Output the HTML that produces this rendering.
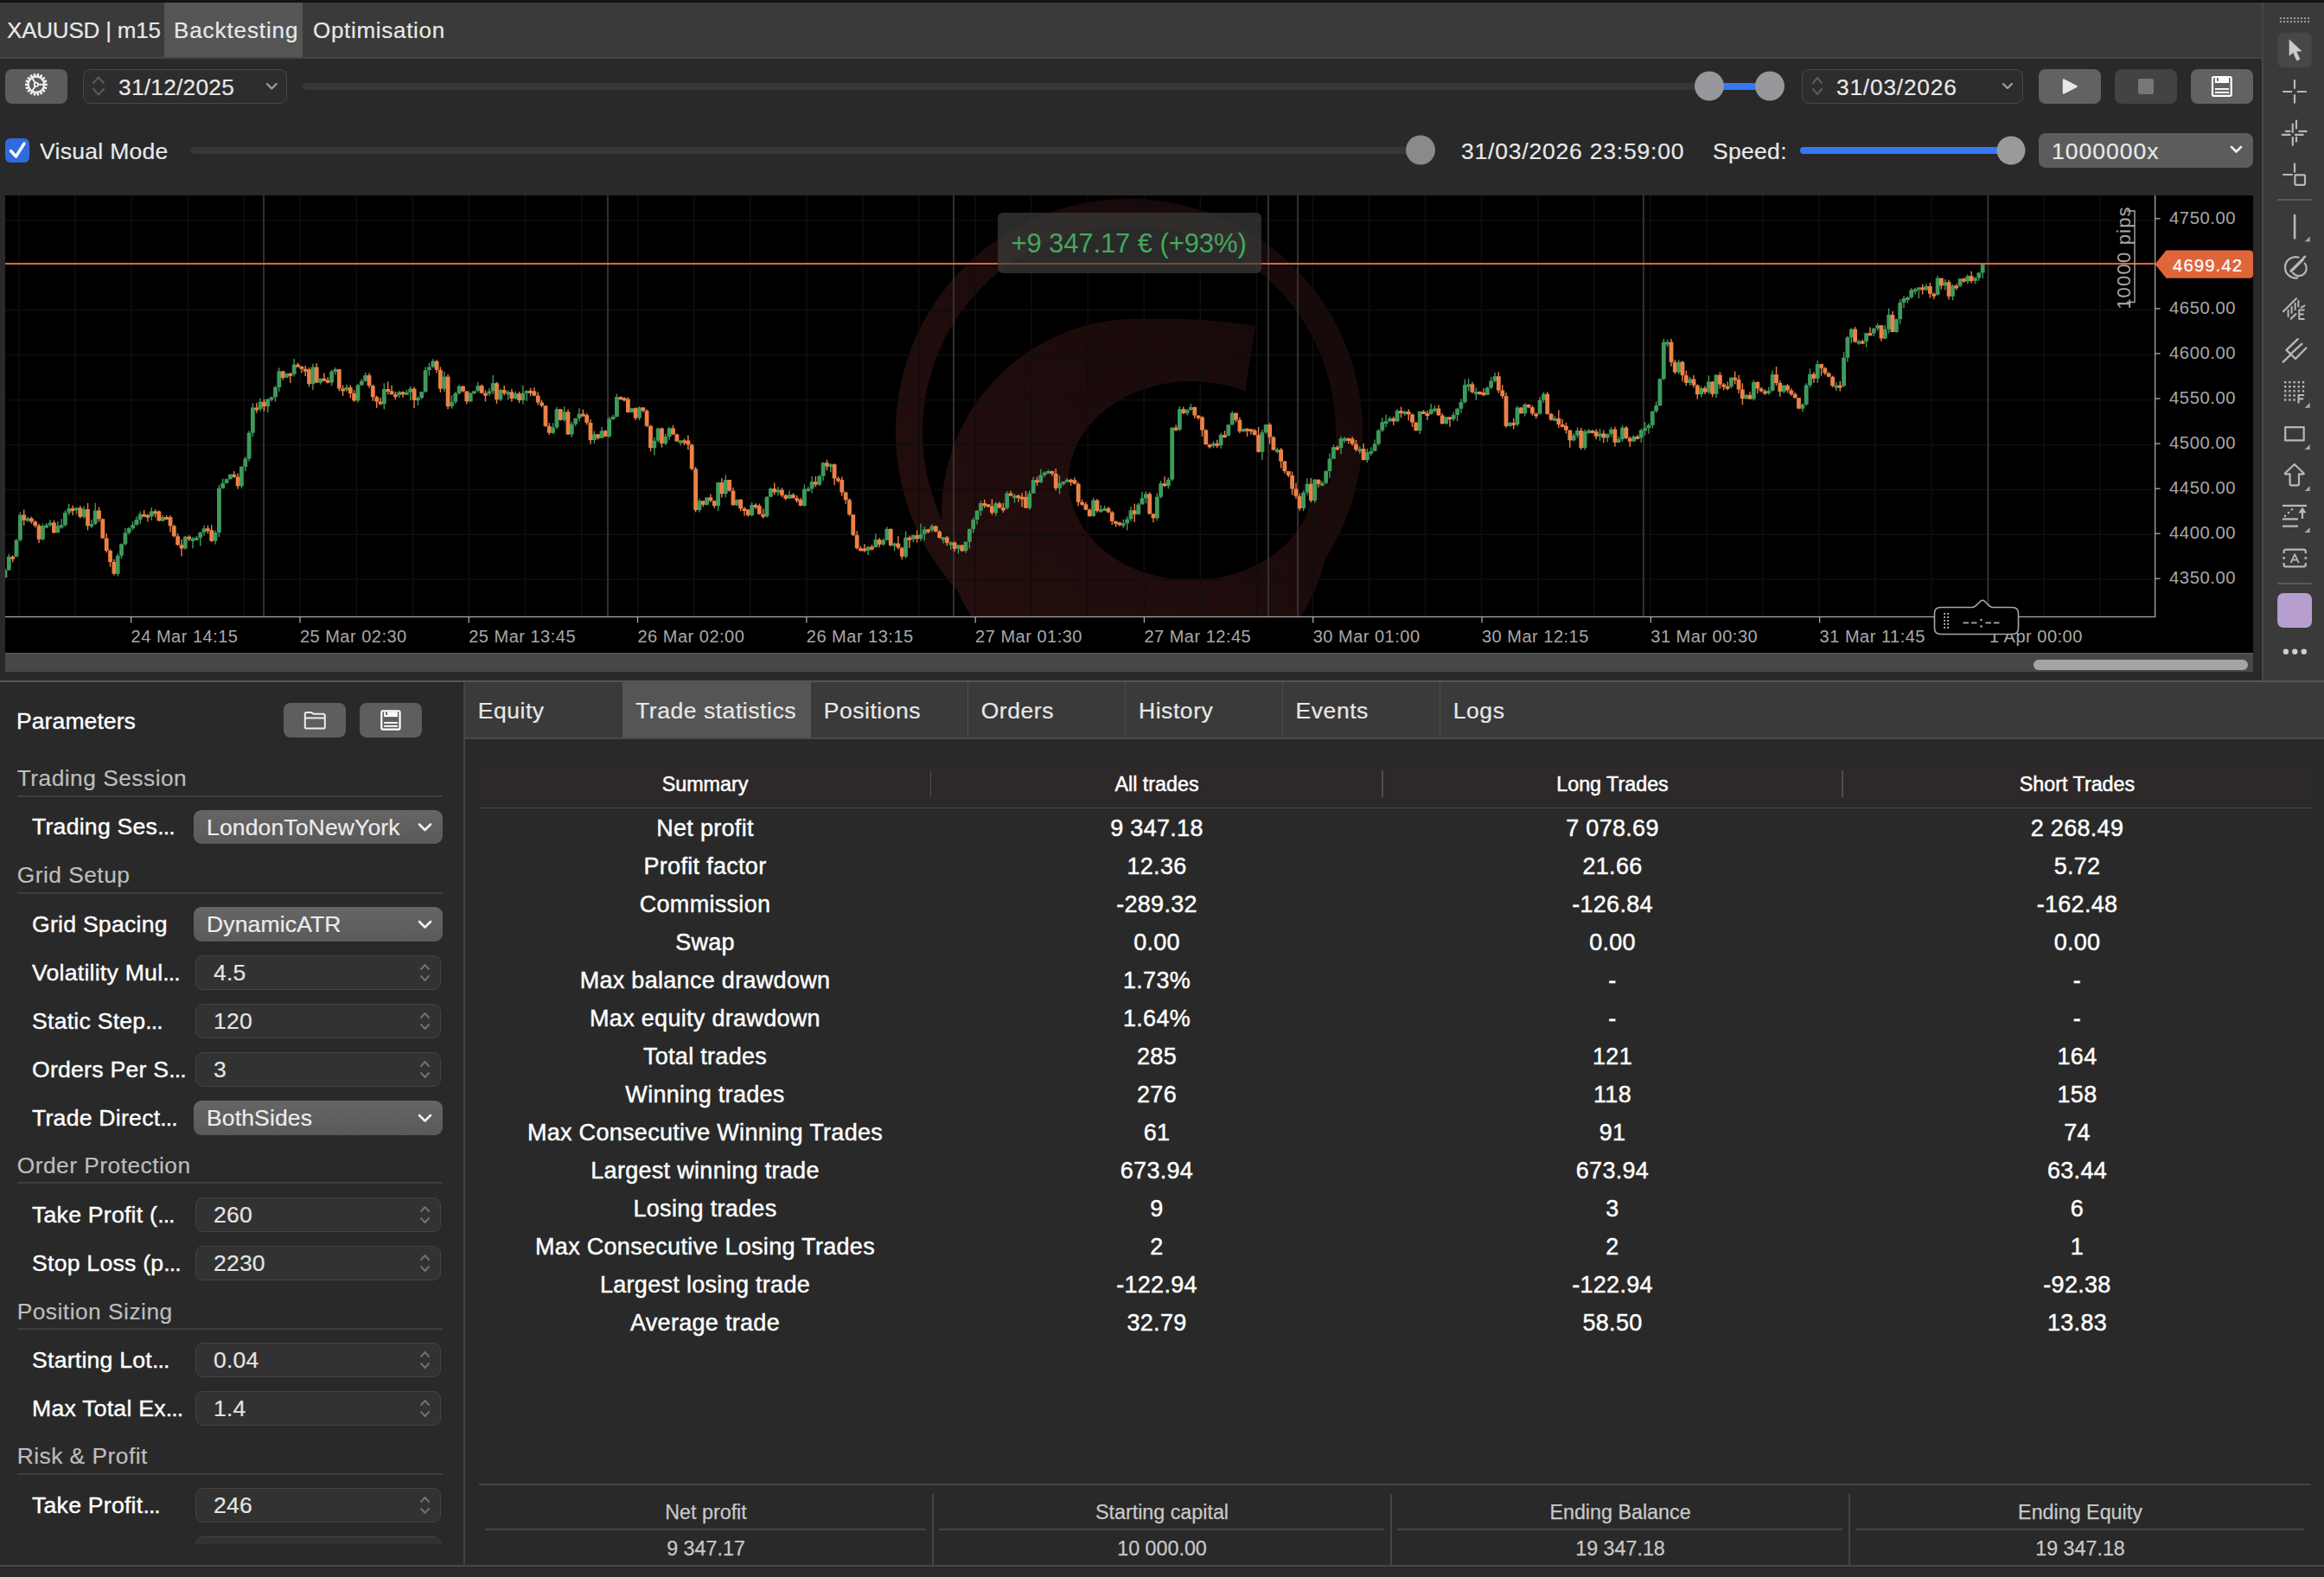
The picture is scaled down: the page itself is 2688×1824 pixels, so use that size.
<!DOCTYPE html><html><head><meta charset="utf-8"><style>
html,body{margin:0;padding:0;width:2688px;height:1824px;overflow:hidden;background:#292929;font-family:"Liberation Sans", sans-serif;}
.t{position:absolute;white-space:nowrap;line-height:1;font-family:"Liberation Sans", sans-serif;}
svg{position:absolute;left:0;top:0;overflow:visible}
</style></head><body>
<div style="position:absolute;left:0px;top:0px;width:2688px;height:3px;background:#121212;"></div>
<div style="position:absolute;left:0px;top:3px;width:2616px;height:63px;background:#3a3a3a;"></div>
<div style="position:absolute;left:0px;top:66px;width:2616px;height:2px;background:#444;"></div>
<div style="position:absolute;left:190px;top:3px;width:160px;height:63px;background:#555555;"></div>
<div class="t" style="left:8.0px;top:22.0px;font-size:26px;color:#e8e8e8;letter-spacing:-0.2px;-webkit-text-stroke:0.2px #e8e8e8;">XAUUSD | m15</div>
<div class="t" style="left:201.0px;top:22.0px;font-size:26px;color:#e8e8e8;letter-spacing:0.9px;-webkit-text-stroke:0.2px #e8e8e8;">Backtesting</div>
<div class="t" style="left:362.0px;top:22.0px;font-size:26px;color:#e8e8e8;letter-spacing:0.7px;-webkit-text-stroke:0.2px #e8e8e8;">Optimisation</div>
<div style="position:absolute;left:2616px;top:3px;width:72px;height:785px;background:#3a3a3a;"></div>
<div style="position:absolute;left:2616px;top:3px;width:1.6px;height:785px;background:#464646;"></div>
<div style="position:absolute;left:6px;top:80px;width:72px;height:40px;background:#5c5c5c;border-radius:8px;"></div>
<svg width="2688" height="200" style="left:0;top:0">
<g transform="translate(41.9,97.8)" fill="none" stroke="#f4f4f4" stroke-width="1.9">
<circle r="9.0"/><circle r="2.2" stroke-width="1.7"/>
<line x1="2.2" y1="0" x2="9" y2="0" stroke-width="1.8"/><line x1="-1.1" y1="1.9" x2="-5.2" y2="8.2"/><line x1="-1.1" y1="-1.9" x2="-5.2" y2="-8.2"/>
</g>
<g transform="translate(41.9,97.8)" fill="#f4f4f4"><path d="M-1.5,-9.5 L-1.1,-12.9 L1.1,-12.9 L1.5,-9.5 Z" transform="rotate(10)"/><path d="M-1.5,-9.5 L-1.1,-12.9 L1.1,-12.9 L1.5,-9.5 Z" transform="rotate(30)"/><path d="M-1.5,-9.5 L-1.1,-12.9 L1.1,-12.9 L1.5,-9.5 Z" transform="rotate(50)"/><path d="M-1.5,-9.5 L-1.1,-12.9 L1.1,-12.9 L1.5,-9.5 Z" transform="rotate(70)"/><path d="M-1.5,-9.5 L-1.1,-12.9 L1.1,-12.9 L1.5,-9.5 Z" transform="rotate(90)"/><path d="M-1.5,-9.5 L-1.1,-12.9 L1.1,-12.9 L1.5,-9.5 Z" transform="rotate(110)"/><path d="M-1.5,-9.5 L-1.1,-12.9 L1.1,-12.9 L1.5,-9.5 Z" transform="rotate(130)"/><path d="M-1.5,-9.5 L-1.1,-12.9 L1.1,-12.9 L1.5,-9.5 Z" transform="rotate(150)"/><path d="M-1.5,-9.5 L-1.1,-12.9 L1.1,-12.9 L1.5,-9.5 Z" transform="rotate(170)"/><path d="M-1.5,-9.5 L-1.1,-12.9 L1.1,-12.9 L1.5,-9.5 Z" transform="rotate(190)"/><path d="M-1.5,-9.5 L-1.1,-12.9 L1.1,-12.9 L1.5,-9.5 Z" transform="rotate(210)"/><path d="M-1.5,-9.5 L-1.1,-12.9 L1.1,-12.9 L1.5,-9.5 Z" transform="rotate(230)"/><path d="M-1.5,-9.5 L-1.1,-12.9 L1.1,-12.9 L1.5,-9.5 Z" transform="rotate(250)"/><path d="M-1.5,-9.5 L-1.1,-12.9 L1.1,-12.9 L1.5,-9.5 Z" transform="rotate(270)"/><path d="M-1.5,-9.5 L-1.1,-12.9 L1.1,-12.9 L1.5,-9.5 Z" transform="rotate(290)"/><path d="M-1.5,-9.5 L-1.1,-12.9 L1.1,-12.9 L1.5,-9.5 Z" transform="rotate(310)"/><path d="M-1.5,-9.5 L-1.1,-12.9 L1.1,-12.9 L1.5,-9.5 Z" transform="rotate(330)"/><path d="M-1.5,-9.5 L-1.1,-12.9 L1.1,-12.9 L1.5,-9.5 Z" transform="rotate(350)"/></g>
</svg>
<div style="position:absolute;left:96px;top:80px;width:236px;height:40px;background:#2d2d2d;border-radius:8px;box-sizing:border-box;border:1.5px solid #474747;"></div>
<svg width="2688" height="200"><g fill="none" stroke="#5a5a5a" stroke-width="2.2" stroke-linecap="round" stroke-linejoin="round">
<polyline points="108,96 114,89.5 120,96"/><polyline points="108,103 114,109.5 120,103"/></g>
<polyline points="309,97 314.3,102.5 319.6,97" fill="none" stroke="#9a9a9a" stroke-width="2.4" stroke-linecap="round" stroke-linejoin="round"/>
</svg>
<div class="t" style="left:137.0px;top:87.5px;font-size:26.3px;color:#e8e8e8;letter-spacing:0.25px;-webkit-text-stroke:0.2px #e8e8e8;">31/12/2025</div>
<div style="position:absolute;left:350px;top:96px;width:1700px;height:8px;background:#363636;border-radius:4px;"></div>
<div style="position:absolute;left:1977px;top:96px;width:70px;height:8px;background:#3478f6;"></div>
<svg width="2688" height="200"><circle cx="1977" cy="99.5" r="17" fill="#98979c"/><circle cx="2047" cy="99.5" r="17" fill="#98979c"/></svg>
<div style="position:absolute;left:2084px;top:80px;width:256px;height:40px;background:#2d2d2d;border-radius:8px;box-sizing:border-box;border:1.5px solid #474747;"></div>
<svg width="2688" height="200"><g fill="none" stroke="#5a5a5a" stroke-width="2.2" stroke-linecap="round" stroke-linejoin="round">
<polyline points="2097,96 2102,90 2107,96"/><polyline points="2097,103 2102,109 2107,103"/></g>
<polyline points="2317,97 2322,102 2327,97" fill="none" stroke="#9a9a9a" stroke-width="2.4" stroke-linecap="round" stroke-linejoin="round"/>
</svg>
<div class="t" style="left:2124.0px;top:87.7px;font-size:26.3px;color:#e8e8e8;letter-spacing:0.8px;-webkit-text-stroke:0.2px #e8e8e8;">31/03/2026</div>
<div style="position:absolute;left:2358px;top:80px;width:72px;height:40px;background:#626262;border-radius:8px;"></div>
<div style="position:absolute;left:2446px;top:80px;width:72px;height:40px;background:#434343;border-radius:8px;"></div>
<div style="position:absolute;left:2534px;top:80px;width:72px;height:40px;background:#626262;border-radius:8px;"></div>
<svg width="2688" height="200">
<path d="M2387,92.5 L2401.5,100 L2387,107.5 Z" fill="#e8e8e8" stroke="#e8e8e8" stroke-width="2.5" stroke-linejoin="round"/>
<rect x="2473" y="91" width="18" height="18" rx="2" fill="#777"/>
<rect x="2559.00" y="89.00" width="21.70" height="21.80" rx="1.6" fill="none" stroke="#fff" stroke-width="2.20"/><rect x="2561.90" y="90.00" width="16.10" height="6.00" fill="#fff" /><rect x="2564.00" y="90.10" width="1.90" height="3.70" fill="#626262" /><rect x="2561.90" y="102.00" width="16.10" height="1.90" fill="#fff" /><rect x="2561.90" y="105.90" width="16.10" height="2.00" fill="#fff" />
</svg>
<div style="position:absolute;left:6px;top:160px;width:28px;height:28px;background:#2f6be0;border-radius:6px;"></div>
<svg width="2688" height="200"><polyline points="12.5,174.5 18.5,181 28,166" fill="none" stroke="#fff" stroke-width="3.4" stroke-linecap="round" stroke-linejoin="round"/></svg>
<div class="t" style="left:46.0px;top:161.6px;font-size:26.5px;color:#e8e8e8;letter-spacing:0.3px;-webkit-text-stroke:0.2px #e8e8e8;">Visual Mode</div>
<div style="position:absolute;left:220px;top:170px;width:1430px;height:8px;background:#363636;border-radius:4px;"></div>
<svg width="2688" height="200"><circle cx="1643" cy="173.5" r="17" fill="#8a8a8a"/></svg>
<div class="t" style="left:1690.0px;top:161.6px;font-size:26.5px;color:#e8e8e8;letter-spacing:0.8px;-webkit-text-stroke:0.2px #e8e8e8;">31/03/2026 23:59:00</div>
<div class="t" style="left:1981.0px;top:161.6px;font-size:26.5px;color:#e8e8e8;letter-spacing:0.3px;-webkit-text-stroke:0.2px #e8e8e8;">Speed:</div>
<div style="position:absolute;left:2082px;top:170px;width:246px;height:8px;background:#3478f6;border-radius:4px;"></div>
<svg width="2688" height="200"><circle cx="2326" cy="174" r="16.5" fill="#9a9a9a"/></svg>
<div style="position:absolute;left:2358px;top:154px;width:248px;height:40px;background:#5c5c5c;border-radius:8px;"></div>
<div class="t" style="left:2373.0px;top:161.6px;font-size:26.5px;color:#e8e8e8;letter-spacing:1.0px;-webkit-text-stroke:0.2px #e8e8e8;">1000000x</div>
<svg width="2688" height="200"><polyline points="2581,170 2586.5,175.5 2592,170" fill="none" stroke="#eee" stroke-width="2.6" stroke-linecap="round" stroke-linejoin="round"/></svg>
<svg width="2688" height="800" style="left:0;top:0"><rect x="6" y="226" width="2600" height="529" fill="#000"/><defs><clipPath id="pc"><rect x="6" y="226" width="2486.6" height="487.4"/></clipPath></defs><g clip-path="url(#pc)"><defs><linearGradient id="wg" gradientUnits="userSpaceOnUse" x1="1040" y1="770" x2="1580" y2="230"><stop offset="0" stop-color="#260e0e"/><stop offset="1" stop-color="#140909"/></linearGradient></defs><circle cx="1314" cy="594" r="225" fill="url(#wg)"/><path d="M1300,369.5 Q1400,366 1453,378 L1441,447 L1300,447 Z" fill="url(#wg)"/><ellipse cx="1378" cy="556" rx="142" ry="115" fill="#000"/><path d="M1441,447 L1453,372 L1600,300 L1600,556 L1441,556 Z" fill="#000"/><circle cx="1306" cy="500" r="254.5" fill="none" stroke="url(#wg)" stroke-width="31"/><rect x="6" y="254.2" width="2486.6" height="1.5" fill="#0e0e0e"/><rect x="6" y="306.1" width="2486.6" height="1.5" fill="#0e0e0e"/><rect x="6" y="358.1" width="2486.6" height="1.5" fill="#0e0e0e"/><rect x="6" y="409.9" width="2486.6" height="1.5" fill="#0e0e0e"/><rect x="6" y="461.9" width="2486.6" height="1.5" fill="#0e0e0e"/><rect x="6" y="513.8" width="2486.6" height="1.5" fill="#0e0e0e"/><rect x="6" y="565.6" width="2486.6" height="1.5" fill="#0e0e0e"/><rect x="6" y="617.5" width="2486.6" height="1.5" fill="#0e0e0e"/><rect x="6" y="669.5" width="2486.6" height="1.5" fill="#0e0e0e"/><rect x="21.2" y="226" width="1.5" height="487.4" fill="#0e0e0e"/><rect x="86.3" y="226" width="1.5" height="487.4" fill="#0e0e0e"/><rect x="151.4" y="226" width="1.5" height="487.4" fill="#0e0e0e"/><rect x="216.4" y="226" width="1.5" height="487.4" fill="#0e0e0e"/><rect x="281.5" y="226" width="1.5" height="487.4" fill="#0e0e0e"/><rect x="346.6" y="226" width="1.5" height="487.4" fill="#0e0e0e"/><rect x="411.6" y="226" width="1.5" height="487.4" fill="#0e0e0e"/><rect x="476.7" y="226" width="1.5" height="487.4" fill="#0e0e0e"/><rect x="541.7" y="226" width="1.5" height="487.4" fill="#0e0e0e"/><rect x="606.8" y="226" width="1.5" height="487.4" fill="#0e0e0e"/><rect x="671.9" y="226" width="1.5" height="487.4" fill="#0e0e0e"/><rect x="736.9" y="226" width="1.5" height="487.4" fill="#0e0e0e"/><rect x="802.0" y="226" width="1.5" height="487.4" fill="#0e0e0e"/><rect x="867.0" y="226" width="1.5" height="487.4" fill="#0e0e0e"/><rect x="932.1" y="226" width="1.5" height="487.4" fill="#0e0e0e"/><rect x="997.2" y="226" width="1.5" height="487.4" fill="#0e0e0e"/><rect x="1062.2" y="226" width="1.5" height="487.4" fill="#0e0e0e"/><rect x="1127.3" y="226" width="1.5" height="487.4" fill="#0e0e0e"/><rect x="1192.3" y="226" width="1.5" height="487.4" fill="#0e0e0e"/><rect x="1257.4" y="226" width="1.5" height="487.4" fill="#0e0e0e"/><rect x="1322.5" y="226" width="1.5" height="487.4" fill="#0e0e0e"/><rect x="1387.5" y="226" width="1.5" height="487.4" fill="#0e0e0e"/><rect x="1452.6" y="226" width="1.5" height="487.4" fill="#0e0e0e"/><rect x="1517.6" y="226" width="1.5" height="487.4" fill="#0e0e0e"/><rect x="1582.7" y="226" width="1.5" height="487.4" fill="#0e0e0e"/><rect x="1647.8" y="226" width="1.5" height="487.4" fill="#0e0e0e"/><rect x="1712.8" y="226" width="1.5" height="487.4" fill="#0e0e0e"/><rect x="1777.9" y="226" width="1.5" height="487.4" fill="#0e0e0e"/><rect x="1842.9" y="226" width="1.5" height="487.4" fill="#0e0e0e"/><rect x="1908.0" y="226" width="1.5" height="487.4" fill="#0e0e0e"/><rect x="1973.1" y="226" width="1.5" height="487.4" fill="#0e0e0e"/><rect x="2038.1" y="226" width="1.5" height="487.4" fill="#0e0e0e"/><rect x="2103.2" y="226" width="1.5" height="487.4" fill="#0e0e0e"/><rect x="2168.2" y="226" width="1.5" height="487.4" fill="#0e0e0e"/><rect x="2233.3" y="226" width="1.5" height="487.4" fill="#0e0e0e"/><rect x="2298.3" y="226" width="1.5" height="487.4" fill="#0e0e0e"/><rect x="2363.4" y="226" width="1.5" height="487.4" fill="#0e0e0e"/><rect x="2428.5" y="226" width="1.5" height="487.4" fill="#0e0e0e"/><rect x="304.1" y="226" width="1.8" height="487.4" fill="#363636"/><rect x="702.1" y="226" width="1.8" height="487.4" fill="#363636"/><rect x="1102.1" y="226" width="1.8" height="487.4" fill="#363636"/><rect x="1466.1" y="226" width="1.8" height="487.4" fill="#363636"/><rect x="1500.1" y="226" width="1.8" height="487.4" fill="#363636"/><rect x="1900.1" y="226" width="1.8" height="487.4" fill="#363636"/><rect x="2298.6" y="226" width="1.8" height="487.4" fill="#363636"/><rect x="5.3" y="657.5" width="1.4" height="11.3" fill="#3e9a5b"/><rect x="3.6" y="659.3" width="4.8" height="8.7" fill="#3e9a5b"/><rect x="9.6" y="640.5" width="1.4" height="19.5" fill="#3e9a5b"/><rect x="7.9" y="643.8" width="4.8" height="15.5" fill="#3e9a5b"/><rect x="14.0" y="642.3" width="1.4" height="8.1" fill="#ec8147"/><rect x="12.3" y="643.8" width="4.8" height="3.0" fill="#ec8147"/><rect x="18.3" y="623.2" width="1.4" height="21.2" fill="#3e9a5b"/><rect x="16.6" y="624.6" width="4.8" height="19.2" fill="#3e9a5b"/><rect x="22.7" y="592.5" width="1.4" height="33.9" fill="#3e9a5b"/><rect x="21.0" y="595.5" width="4.8" height="29.1" fill="#3e9a5b"/><rect x="27.0" y="589.5" width="1.4" height="18.3" fill="#ec8147"/><rect x="25.3" y="595.5" width="4.8" height="6.2" fill="#ec8147"/><rect x="31.3" y="597.8" width="1.4" height="5.7" fill="#3e9a5b"/><rect x="29.6" y="599.5" width="4.8" height="3.0" fill="#3e9a5b"/><rect x="35.7" y="597.6" width="1.4" height="8.1" fill="#ec8147"/><rect x="34.0" y="599.5" width="4.8" height="4.0" fill="#ec8147"/><rect x="40.0" y="602.1" width="1.4" height="8.1" fill="#ec8147"/><rect x="38.3" y="603.5" width="4.8" height="4.4" fill="#ec8147"/><rect x="44.4" y="605.9" width="1.4" height="22.0" fill="#ec8147"/><rect x="42.7" y="607.9" width="4.8" height="15.9" fill="#ec8147"/><rect x="48.7" y="605.7" width="1.4" height="19.3" fill="#3e9a5b"/><rect x="47.0" y="608.3" width="4.8" height="15.5" fill="#3e9a5b"/><rect x="53.0" y="605.1" width="1.4" height="6.1" fill="#3e9a5b"/><rect x="51.3" y="607.3" width="4.8" height="3.0" fill="#3e9a5b"/><rect x="57.4" y="601.1" width="1.4" height="8.2" fill="#3e9a5b"/><rect x="55.7" y="604.5" width="4.8" height="3.0" fill="#3e9a5b"/><rect x="61.7" y="601.6" width="1.4" height="15.4" fill="#ec8147"/><rect x="60.0" y="604.5" width="4.8" height="11.7" fill="#ec8147"/><rect x="66.1" y="602.7" width="1.4" height="13.6" fill="#3e9a5b"/><rect x="64.4" y="607.9" width="4.8" height="8.2" fill="#3e9a5b"/><rect x="70.4" y="600.3" width="1.4" height="11.2" fill="#3e9a5b"/><rect x="68.7" y="607.3" width="4.8" height="3.0" fill="#3e9a5b"/><rect x="74.7" y="590.3" width="1.4" height="18.8" fill="#3e9a5b"/><rect x="73.0" y="593.1" width="4.8" height="14.2" fill="#3e9a5b"/><rect x="79.1" y="582.9" width="1.4" height="13.1" fill="#3e9a5b"/><rect x="77.4" y="588.0" width="4.8" height="5.1" fill="#3e9a5b"/><rect x="83.4" y="584.7" width="1.4" height="11.4" fill="#ec8147"/><rect x="81.7" y="588.0" width="4.8" height="3.0" fill="#ec8147"/><rect x="87.8" y="586.9" width="1.4" height="8.0" fill="#3e9a5b"/><rect x="86.1" y="587.3" width="4.8" height="3.0" fill="#3e9a5b"/><rect x="92.1" y="585.2" width="1.4" height="14.3" fill="#ec8147"/><rect x="90.4" y="587.3" width="4.8" height="10.5" fill="#ec8147"/><rect x="96.4" y="585.6" width="1.4" height="14.1" fill="#3e9a5b"/><rect x="94.7" y="589.0" width="4.8" height="8.9" fill="#3e9a5b"/><rect x="100.8" y="581.9" width="1.4" height="31.5" fill="#ec8147"/><rect x="99.1" y="589.0" width="4.8" height="19.2" fill="#ec8147"/><rect x="105.1" y="600.9" width="1.4" height="10.1" fill="#3e9a5b"/><rect x="103.4" y="605.9" width="4.8" height="3.0" fill="#3e9a5b"/><rect x="109.5" y="581.7" width="1.4" height="25.5" fill="#3e9a5b"/><rect x="107.8" y="590.5" width="4.8" height="15.4" fill="#3e9a5b"/><rect x="113.8" y="586.6" width="1.4" height="17.1" fill="#ec8147"/><rect x="112.1" y="590.5" width="4.8" height="9.8" fill="#ec8147"/><rect x="118.1" y="599.7" width="1.4" height="23.6" fill="#ec8147"/><rect x="116.4" y="600.3" width="4.8" height="22.2" fill="#ec8147"/><rect x="122.5" y="616.9" width="1.4" height="22.3" fill="#ec8147"/><rect x="120.8" y="622.5" width="4.8" height="14.5" fill="#ec8147"/><rect x="126.8" y="635.1" width="1.4" height="20.4" fill="#ec8147"/><rect x="125.1" y="637.0" width="4.8" height="13.0" fill="#ec8147"/><rect x="131.2" y="646.7" width="1.4" height="18.9" fill="#ec8147"/><rect x="129.5" y="650.0" width="4.8" height="13.7" fill="#ec8147"/><rect x="135.5" y="640.4" width="1.4" height="26.2" fill="#3e9a5b"/><rect x="133.8" y="642.7" width="4.8" height="21.0" fill="#3e9a5b"/><rect x="139.8" y="628.6" width="1.4" height="17.6" fill="#3e9a5b"/><rect x="138.1" y="629.2" width="4.8" height="13.4" fill="#3e9a5b"/><rect x="144.2" y="610.5" width="1.4" height="20.6" fill="#3e9a5b"/><rect x="142.5" y="616.2" width="4.8" height="13.1" fill="#3e9a5b"/><rect x="148.5" y="609.8" width="1.4" height="8.7" fill="#3e9a5b"/><rect x="146.8" y="610.9" width="4.8" height="5.3" fill="#3e9a5b"/><rect x="152.9" y="603.2" width="1.4" height="10.0" fill="#3e9a5b"/><rect x="151.2" y="607.2" width="4.8" height="3.7" fill="#3e9a5b"/><rect x="157.2" y="597.3" width="1.4" height="10.0" fill="#3e9a5b"/><rect x="155.5" y="601.0" width="4.8" height="6.3" fill="#3e9a5b"/><rect x="161.5" y="591.4" width="1.4" height="14.7" fill="#3e9a5b"/><rect x="159.8" y="594.7" width="4.8" height="6.3" fill="#3e9a5b"/><rect x="165.9" y="589.8" width="1.4" height="8.3" fill="#ec8147"/><rect x="164.2" y="594.7" width="4.8" height="3.0" fill="#ec8147"/><rect x="170.2" y="594.5" width="1.4" height="9.0" fill="#ec8147"/><rect x="168.5" y="595.6" width="4.8" height="3.0" fill="#ec8147"/><rect x="174.6" y="586.9" width="1.4" height="15.0" fill="#3e9a5b"/><rect x="172.9" y="591.3" width="4.8" height="6.1" fill="#3e9a5b"/><rect x="178.9" y="589.1" width="1.4" height="9.2" fill="#ec8147"/><rect x="177.2" y="591.3" width="4.8" height="3.0" fill="#ec8147"/><rect x="183.2" y="590.3" width="1.4" height="12.7" fill="#ec8147"/><rect x="181.5" y="591.5" width="4.8" height="10.9" fill="#ec8147"/><rect x="187.6" y="595.9" width="1.4" height="7.2" fill="#3e9a5b"/><rect x="185.9" y="598.0" width="4.8" height="4.5" fill="#3e9a5b"/><rect x="191.9" y="595.9" width="1.4" height="5.0" fill="#ec8147"/><rect x="190.2" y="598.0" width="4.8" height="3.0" fill="#ec8147"/><rect x="196.3" y="596.2" width="1.4" height="19.3" fill="#ec8147"/><rect x="194.6" y="598.1" width="4.8" height="10.3" fill="#ec8147"/><rect x="200.6" y="606.9" width="1.4" height="14.6" fill="#ec8147"/><rect x="198.9" y="608.4" width="4.8" height="11.8" fill="#ec8147"/><rect x="204.9" y="617.0" width="1.4" height="14.3" fill="#ec8147"/><rect x="203.2" y="620.3" width="4.8" height="9.9" fill="#ec8147"/><rect x="209.3" y="623.7" width="1.4" height="19.7" fill="#ec8147"/><rect x="207.6" y="630.1" width="4.8" height="4.3" fill="#ec8147"/><rect x="213.6" y="619.8" width="1.4" height="16.0" fill="#3e9a5b"/><rect x="211.9" y="620.7" width="4.8" height="13.7" fill="#3e9a5b"/><rect x="218.0" y="619.2" width="1.4" height="6.8" fill="#ec8147"/><rect x="216.3" y="620.7" width="4.8" height="3.0" fill="#ec8147"/><rect x="222.3" y="621.0" width="1.4" height="13.3" fill="#3e9a5b"/><rect x="220.6" y="622.8" width="4.8" height="3.0" fill="#3e9a5b"/><rect x="226.6" y="620.0" width="1.4" height="5.3" fill="#3e9a5b"/><rect x="224.9" y="621.9" width="4.8" height="3.0" fill="#3e9a5b"/><rect x="231.0" y="615.5" width="1.4" height="16.0" fill="#3e9a5b"/><rect x="229.3" y="615.7" width="4.8" height="6.2" fill="#3e9a5b"/><rect x="235.3" y="607.6" width="1.4" height="12.2" fill="#3e9a5b"/><rect x="233.6" y="611.2" width="4.8" height="4.6" fill="#3e9a5b"/><rect x="239.7" y="607.8" width="1.4" height="9.3" fill="#ec8147"/><rect x="238.0" y="611.2" width="4.8" height="3.0" fill="#ec8147"/><rect x="244.0" y="607.2" width="1.4" height="19.7" fill="#ec8147"/><rect x="242.3" y="613.2" width="4.8" height="12.5" fill="#ec8147"/><rect x="248.3" y="613.7" width="1.4" height="15.8" fill="#3e9a5b"/><rect x="246.6" y="615.9" width="4.8" height="9.8" fill="#3e9a5b"/><rect x="252.7" y="560.9" width="1.4" height="60.1" fill="#3e9a5b"/><rect x="251.0" y="564.7" width="4.8" height="51.2" fill="#3e9a5b"/><rect x="257.0" y="553.6" width="1.4" height="11.7" fill="#3e9a5b"/><rect x="255.3" y="558.8" width="4.8" height="5.9" fill="#3e9a5b"/><rect x="261.4" y="553.7" width="1.4" height="5.8" fill="#3e9a5b"/><rect x="259.7" y="554.2" width="4.8" height="4.6" fill="#3e9a5b"/><rect x="265.7" y="548.2" width="1.4" height="6.3" fill="#3e9a5b"/><rect x="264.0" y="548.7" width="4.8" height="5.5" fill="#3e9a5b"/><rect x="270.0" y="545.0" width="1.4" height="7.7" fill="#ec8147"/><rect x="268.3" y="548.7" width="4.8" height="3.0" fill="#ec8147"/><rect x="274.4" y="547.5" width="1.4" height="17.9" fill="#ec8147"/><rect x="272.7" y="551.5" width="4.8" height="10.7" fill="#ec8147"/><rect x="278.7" y="539.3" width="1.4" height="25.4" fill="#3e9a5b"/><rect x="277.0" y="539.8" width="4.8" height="22.5" fill="#3e9a5b"/><rect x="283.1" y="528.2" width="1.4" height="16.9" fill="#3e9a5b"/><rect x="281.4" y="530.5" width="4.8" height="9.3" fill="#3e9a5b"/><rect x="287.4" y="498.4" width="1.4" height="35.4" fill="#3e9a5b"/><rect x="285.7" y="500.6" width="4.8" height="29.9" fill="#3e9a5b"/><rect x="291.7" y="466.2" width="1.4" height="38.8" fill="#3e9a5b"/><rect x="290.0" y="471.4" width="4.8" height="29.2" fill="#3e9a5b"/><rect x="296.1" y="466.2" width="1.4" height="11.4" fill="#ec8147"/><rect x="294.4" y="471.4" width="4.8" height="3.0" fill="#ec8147"/><rect x="300.4" y="460.7" width="1.4" height="15.1" fill="#3e9a5b"/><rect x="298.7" y="464.7" width="4.8" height="8.4" fill="#3e9a5b"/><rect x="304.8" y="461.5" width="1.4" height="14.1" fill="#ec8147"/><rect x="303.1" y="464.7" width="4.8" height="5.5" fill="#ec8147"/><rect x="309.1" y="461.0" width="1.4" height="16.1" fill="#3e9a5b"/><rect x="307.4" y="461.6" width="4.8" height="8.5" fill="#3e9a5b"/><rect x="313.4" y="458.9" width="1.4" height="5.4" fill="#3e9a5b"/><rect x="311.7" y="459.3" width="4.8" height="3.0" fill="#3e9a5b"/><rect x="317.8" y="446.4" width="1.4" height="18.1" fill="#3e9a5b"/><rect x="316.1" y="447.9" width="4.8" height="11.4" fill="#3e9a5b"/><rect x="322.1" y="425.4" width="1.4" height="27.7" fill="#3e9a5b"/><rect x="320.4" y="429.4" width="4.8" height="18.5" fill="#3e9a5b"/><rect x="326.5" y="428.8" width="1.4" height="10.7" fill="#ec8147"/><rect x="324.8" y="429.4" width="4.8" height="7.5" fill="#ec8147"/><rect x="330.8" y="431.5" width="1.4" height="5.8" fill="#3e9a5b"/><rect x="329.1" y="431.9" width="4.8" height="4.9" fill="#3e9a5b"/><rect x="335.1" y="431.0" width="1.4" height="12.0" fill="#ec8147"/><rect x="333.4" y="431.9" width="4.8" height="3.0" fill="#ec8147"/><rect x="339.5" y="415.1" width="1.4" height="20.5" fill="#3e9a5b"/><rect x="337.8" y="421.6" width="4.8" height="11.2" fill="#3e9a5b"/><rect x="343.8" y="419.5" width="1.4" height="5.2" fill="#ec8147"/><rect x="342.1" y="421.6" width="4.8" height="3.0" fill="#ec8147"/><rect x="348.2" y="423.5" width="1.4" height="7.9" fill="#ec8147"/><rect x="346.5" y="423.8" width="4.8" height="3.0" fill="#ec8147"/><rect x="352.5" y="423.1" width="1.4" height="11.9" fill="#ec8147"/><rect x="350.8" y="426.7" width="4.8" height="3.0" fill="#ec8147"/><rect x="356.8" y="425.1" width="1.4" height="22.1" fill="#ec8147"/><rect x="355.1" y="427.4" width="4.8" height="16.7" fill="#ec8147"/><rect x="361.2" y="420.8" width="1.4" height="30.2" fill="#3e9a5b"/><rect x="359.5" y="424.6" width="4.8" height="19.6" fill="#3e9a5b"/><rect x="365.5" y="420.2" width="1.4" height="22.5" fill="#ec8147"/><rect x="363.8" y="424.6" width="4.8" height="18.1" fill="#ec8147"/><rect x="369.9" y="437.6" width="1.4" height="7.1" fill="#3e9a5b"/><rect x="368.2" y="437.7" width="4.8" height="4.9" fill="#3e9a5b"/><rect x="374.2" y="431.5" width="1.4" height="9.4" fill="#ec8147"/><rect x="372.5" y="437.7" width="4.8" height="3.0" fill="#ec8147"/><rect x="378.5" y="436.2" width="1.4" height="7.2" fill="#ec8147"/><rect x="376.8" y="439.7" width="4.8" height="3.0" fill="#ec8147"/><rect x="382.9" y="427.7" width="1.4" height="18.5" fill="#3e9a5b"/><rect x="381.2" y="429.7" width="4.8" height="12.8" fill="#3e9a5b"/><rect x="387.2" y="425.0" width="1.4" height="8.6" fill="#3e9a5b"/><rect x="385.5" y="427.1" width="4.8" height="3.0" fill="#3e9a5b"/><rect x="391.6" y="427.1" width="1.4" height="25.2" fill="#ec8147"/><rect x="389.9" y="427.1" width="4.8" height="22.4" fill="#ec8147"/><rect x="395.9" y="445.3" width="1.4" height="12.6" fill="#ec8147"/><rect x="394.2" y="449.5" width="4.8" height="3.0" fill="#ec8147"/><rect x="400.2" y="444.8" width="1.4" height="8.3" fill="#3e9a5b"/><rect x="398.5" y="448.1" width="4.8" height="3.1" fill="#3e9a5b"/><rect x="404.6" y="445.4" width="1.4" height="15.0" fill="#ec8147"/><rect x="402.9" y="448.1" width="4.8" height="7.0" fill="#ec8147"/><rect x="408.9" y="450.9" width="1.4" height="13.8" fill="#ec8147"/><rect x="407.2" y="455.0" width="4.8" height="8.4" fill="#ec8147"/><rect x="413.3" y="444.2" width="1.4" height="21.4" fill="#3e9a5b"/><rect x="411.6" y="445.4" width="4.8" height="18.0" fill="#3e9a5b"/><rect x="417.6" y="438.2" width="1.4" height="8.2" fill="#3e9a5b"/><rect x="415.9" y="440.7" width="4.8" height="4.7" fill="#3e9a5b"/><rect x="421.9" y="431.0" width="1.4" height="10.7" fill="#3e9a5b"/><rect x="420.2" y="434.1" width="4.8" height="6.6" fill="#3e9a5b"/><rect x="426.3" y="431.4" width="1.4" height="17.3" fill="#ec8147"/><rect x="424.6" y="434.1" width="4.8" height="12.0" fill="#ec8147"/><rect x="430.6" y="444.9" width="1.4" height="18.9" fill="#ec8147"/><rect x="428.9" y="446.1" width="4.8" height="13.1" fill="#ec8147"/><rect x="435.0" y="457.6" width="1.4" height="14.2" fill="#ec8147"/><rect x="433.3" y="459.2" width="4.8" height="5.3" fill="#ec8147"/><rect x="439.3" y="459.9" width="1.4" height="8.6" fill="#ec8147"/><rect x="437.6" y="464.5" width="4.8" height="3.0" fill="#ec8147"/><rect x="443.6" y="443.2" width="1.4" height="30.1" fill="#3e9a5b"/><rect x="441.9" y="450.0" width="4.8" height="17.1" fill="#3e9a5b"/><rect x="448.0" y="441.5" width="1.4" height="14.7" fill="#ec8147"/><rect x="446.3" y="450.0" width="4.8" height="3.0" fill="#ec8147"/><rect x="452.3" y="445.7" width="1.4" height="10.9" fill="#ec8147"/><rect x="450.6" y="452.3" width="4.8" height="3.9" fill="#ec8147"/><rect x="456.7" y="453.0" width="1.4" height="9.3" fill="#ec8147"/><rect x="455.0" y="456.2" width="4.8" height="3.0" fill="#ec8147"/><rect x="461.0" y="452.3" width="1.4" height="7.8" fill="#3e9a5b"/><rect x="459.3" y="453.3" width="4.8" height="3.8" fill="#3e9a5b"/><rect x="465.3" y="452.6" width="1.4" height="7.2" fill="#ec8147"/><rect x="463.6" y="453.3" width="4.8" height="3.0" fill="#ec8147"/><rect x="469.7" y="450.6" width="1.4" height="6.5" fill="#3e9a5b"/><rect x="468.0" y="453.7" width="4.8" height="3.0" fill="#3e9a5b"/><rect x="474.0" y="446.7" width="1.4" height="16.4" fill="#3e9a5b"/><rect x="472.3" y="449.6" width="4.8" height="4.1" fill="#3e9a5b"/><rect x="478.4" y="447.4" width="1.4" height="24.6" fill="#ec8147"/><rect x="476.7" y="449.6" width="4.8" height="13.3" fill="#ec8147"/><rect x="482.7" y="458.4" width="1.4" height="10.6" fill="#3e9a5b"/><rect x="481.0" y="460.1" width="4.8" height="3.0" fill="#3e9a5b"/><rect x="487.0" y="452.9" width="1.4" height="9.0" fill="#3e9a5b"/><rect x="485.3" y="453.1" width="4.8" height="7.0" fill="#3e9a5b"/><rect x="491.4" y="424.5" width="1.4" height="29.8" fill="#3e9a5b"/><rect x="489.7" y="428.1" width="4.8" height="25.0" fill="#3e9a5b"/><rect x="495.7" y="419.9" width="1.4" height="14.6" fill="#3e9a5b"/><rect x="494.0" y="424.5" width="4.8" height="3.6" fill="#3e9a5b"/><rect x="500.1" y="415.4" width="1.4" height="10.1" fill="#3e9a5b"/><rect x="498.4" y="417.7" width="4.8" height="6.8" fill="#3e9a5b"/><rect x="504.4" y="416.3" width="1.4" height="15.0" fill="#ec8147"/><rect x="502.7" y="417.7" width="4.8" height="10.2" fill="#ec8147"/><rect x="508.7" y="424.3" width="1.4" height="29.5" fill="#ec8147"/><rect x="507.0" y="427.9" width="4.8" height="21.7" fill="#ec8147"/><rect x="513.1" y="429.6" width="1.4" height="23.4" fill="#3e9a5b"/><rect x="511.4" y="435.6" width="4.8" height="14.0" fill="#3e9a5b"/><rect x="517.4" y="432.8" width="1.4" height="40.4" fill="#ec8147"/><rect x="515.7" y="435.6" width="4.8" height="34.5" fill="#ec8147"/><rect x="521.8" y="457.2" width="1.4" height="15.5" fill="#3e9a5b"/><rect x="520.1" y="464.8" width="4.8" height="5.3" fill="#3e9a5b"/><rect x="526.1" y="453.1" width="1.4" height="14.2" fill="#3e9a5b"/><rect x="524.4" y="454.9" width="4.8" height="9.9" fill="#3e9a5b"/><rect x="530.4" y="445.1" width="1.4" height="11.2" fill="#3e9a5b"/><rect x="528.7" y="446.7" width="4.8" height="8.2" fill="#3e9a5b"/><rect x="534.8" y="446.0" width="1.4" height="7.7" fill="#ec8147"/><rect x="533.1" y="446.7" width="4.8" height="5.8" fill="#ec8147"/><rect x="539.1" y="452.4" width="1.4" height="14.9" fill="#ec8147"/><rect x="537.4" y="452.5" width="4.8" height="11.8" fill="#ec8147"/><rect x="543.5" y="454.4" width="1.4" height="10.4" fill="#3e9a5b"/><rect x="541.8" y="454.4" width="4.8" height="10.0" fill="#3e9a5b"/><rect x="547.8" y="452.1" width="1.4" height="3.6" fill="#3e9a5b"/><rect x="546.1" y="452.2" width="4.8" height="3.0" fill="#3e9a5b"/><rect x="552.1" y="441.7" width="1.4" height="11.9" fill="#3e9a5b"/><rect x="550.4" y="446.1" width="4.8" height="6.0" fill="#3e9a5b"/><rect x="556.5" y="444.6" width="1.4" height="10.8" fill="#ec8147"/><rect x="554.8" y="446.1" width="4.8" height="8.6" fill="#ec8147"/><rect x="560.8" y="451.4" width="1.4" height="13.0" fill="#ec8147"/><rect x="559.1" y="454.7" width="4.8" height="3.0" fill="#ec8147"/><rect x="565.2" y="449.1" width="1.4" height="8.8" fill="#3e9a5b"/><rect x="563.5" y="452.4" width="4.8" height="3.0" fill="#3e9a5b"/><rect x="569.5" y="434.0" width="1.4" height="22.0" fill="#3e9a5b"/><rect x="567.8" y="443.2" width="4.8" height="9.2" fill="#3e9a5b"/><rect x="573.8" y="441.9" width="1.4" height="25.2" fill="#ec8147"/><rect x="572.1" y="443.2" width="4.8" height="19.0" fill="#ec8147"/><rect x="578.2" y="449.2" width="1.4" height="14.8" fill="#3e9a5b"/><rect x="576.5" y="451.0" width="4.8" height="11.2" fill="#3e9a5b"/><rect x="582.5" y="445.8" width="1.4" height="11.5" fill="#ec8147"/><rect x="580.8" y="451.0" width="4.8" height="3.8" fill="#ec8147"/><rect x="586.9" y="451.3" width="1.4" height="10.9" fill="#3e9a5b"/><rect x="585.2" y="453.4" width="4.8" height="3.0" fill="#3e9a5b"/><rect x="591.2" y="449.9" width="1.4" height="14.9" fill="#ec8147"/><rect x="589.5" y="453.4" width="4.8" height="7.6" fill="#ec8147"/><rect x="595.5" y="452.6" width="1.4" height="9.4" fill="#3e9a5b"/><rect x="593.8" y="455.2" width="4.8" height="5.8" fill="#3e9a5b"/><rect x="599.9" y="453.1" width="1.4" height="13.1" fill="#ec8147"/><rect x="598.2" y="455.2" width="4.8" height="7.8" fill="#ec8147"/><rect x="604.2" y="445.8" width="1.4" height="21.6" fill="#3e9a5b"/><rect x="602.5" y="454.7" width="4.8" height="8.3" fill="#3e9a5b"/><rect x="608.6" y="451.6" width="1.4" height="12.4" fill="#3e9a5b"/><rect x="606.9" y="451.9" width="4.8" height="3.0" fill="#3e9a5b"/><rect x="612.9" y="448.8" width="1.4" height="9.5" fill="#ec8147"/><rect x="611.2" y="451.9" width="4.8" height="3.0" fill="#ec8147"/><rect x="617.2" y="448.3" width="1.4" height="10.0" fill="#ec8147"/><rect x="615.5" y="452.4" width="4.8" height="5.2" fill="#ec8147"/><rect x="621.6" y="453.7" width="1.4" height="14.6" fill="#ec8147"/><rect x="619.9" y="457.6" width="4.8" height="7.9" fill="#ec8147"/><rect x="625.9" y="462.6" width="1.4" height="8.5" fill="#ec8147"/><rect x="624.2" y="465.6" width="4.8" height="3.6" fill="#ec8147"/><rect x="630.3" y="469.0" width="1.4" height="24.7" fill="#ec8147"/><rect x="628.6" y="469.2" width="4.8" height="23.7" fill="#ec8147"/><rect x="634.6" y="489.1" width="1.4" height="13.8" fill="#ec8147"/><rect x="632.9" y="492.8" width="4.8" height="7.9" fill="#ec8147"/><rect x="638.9" y="489.2" width="1.4" height="13.0" fill="#3e9a5b"/><rect x="637.2" y="494.4" width="4.8" height="6.4" fill="#3e9a5b"/><rect x="643.3" y="470.8" width="1.4" height="25.5" fill="#3e9a5b"/><rect x="641.6" y="473.2" width="4.8" height="21.1" fill="#3e9a5b"/><rect x="647.6" y="473.0" width="1.4" height="13.6" fill="#ec8147"/><rect x="645.9" y="473.2" width="4.8" height="12.6" fill="#ec8147"/><rect x="652.0" y="470.1" width="1.4" height="17.6" fill="#3e9a5b"/><rect x="650.3" y="476.4" width="4.8" height="9.4" fill="#3e9a5b"/><rect x="656.3" y="473.4" width="1.4" height="29.8" fill="#ec8147"/><rect x="654.6" y="476.4" width="4.8" height="26.0" fill="#ec8147"/><rect x="660.6" y="487.9" width="1.4" height="17.9" fill="#3e9a5b"/><rect x="658.9" y="490.6" width="4.8" height="11.9" fill="#3e9a5b"/><rect x="665.0" y="483.6" width="1.4" height="9.2" fill="#3e9a5b"/><rect x="663.3" y="483.8" width="4.8" height="6.8" fill="#3e9a5b"/><rect x="669.3" y="472.2" width="1.4" height="15.3" fill="#3e9a5b"/><rect x="667.6" y="478.6" width="4.8" height="5.2" fill="#3e9a5b"/><rect x="673.7" y="473.7" width="1.4" height="8.0" fill="#ec8147"/><rect x="672.0" y="478.6" width="4.8" height="3.0" fill="#ec8147"/><rect x="678.0" y="477.9" width="1.4" height="13.5" fill="#ec8147"/><rect x="676.3" y="480.1" width="4.8" height="8.8" fill="#ec8147"/><rect x="682.3" y="484.9" width="1.4" height="28.8" fill="#ec8147"/><rect x="680.6" y="489.0" width="4.8" height="20.1" fill="#ec8147"/><rect x="686.7" y="498.5" width="1.4" height="14.3" fill="#3e9a5b"/><rect x="685.0" y="502.2" width="4.8" height="6.8" fill="#3e9a5b"/><rect x="691.0" y="502.2" width="1.4" height="6.3" fill="#ec8147"/><rect x="689.3" y="502.2" width="4.8" height="4.6" fill="#ec8147"/><rect x="695.4" y="494.0" width="1.4" height="12.9" fill="#3e9a5b"/><rect x="693.7" y="498.3" width="4.8" height="8.5" fill="#3e9a5b"/><rect x="699.7" y="497.2" width="1.4" height="7.9" fill="#ec8147"/><rect x="698.0" y="498.3" width="4.8" height="6.6" fill="#ec8147"/><rect x="704.0" y="482.2" width="1.4" height="23.9" fill="#3e9a5b"/><rect x="702.3" y="484.7" width="4.8" height="20.2" fill="#3e9a5b"/><rect x="708.4" y="479.7" width="1.4" height="6.0" fill="#3e9a5b"/><rect x="706.7" y="482.0" width="4.8" height="3.0" fill="#3e9a5b"/><rect x="712.7" y="455.6" width="1.4" height="26.6" fill="#3e9a5b"/><rect x="711.0" y="459.1" width="4.8" height="23.0" fill="#3e9a5b"/><rect x="717.1" y="458.4" width="1.4" height="4.2" fill="#ec8147"/><rect x="715.4" y="459.1" width="4.8" height="3.0" fill="#ec8147"/><rect x="721.4" y="459.4" width="1.4" height="5.0" fill="#ec8147"/><rect x="719.7" y="460.3" width="4.8" height="3.0" fill="#ec8147"/><rect x="725.7" y="459.4" width="1.4" height="17.7" fill="#ec8147"/><rect x="724.0" y="461.6" width="4.8" height="15.4" fill="#ec8147"/><rect x="730.1" y="471.7" width="1.4" height="5.5" fill="#3e9a5b"/><rect x="728.4" y="472.2" width="4.8" height="4.8" fill="#3e9a5b"/><rect x="734.4" y="471.2" width="1.4" height="14.9" fill="#ec8147"/><rect x="732.7" y="472.2" width="4.8" height="11.3" fill="#ec8147"/><rect x="738.8" y="470.0" width="1.4" height="16.1" fill="#3e9a5b"/><rect x="737.1" y="471.3" width="4.8" height="12.2" fill="#3e9a5b"/><rect x="743.1" y="470.9" width="1.4" height="6.1" fill="#ec8147"/><rect x="741.4" y="471.3" width="4.8" height="3.9" fill="#ec8147"/><rect x="747.4" y="473.4" width="1.4" height="20.7" fill="#ec8147"/><rect x="745.7" y="475.2" width="4.8" height="17.4" fill="#ec8147"/><rect x="751.8" y="491.5" width="1.4" height="30.5" fill="#ec8147"/><rect x="750.1" y="492.6" width="4.8" height="25.5" fill="#ec8147"/><rect x="756.1" y="505.8" width="1.4" height="20.7" fill="#3e9a5b"/><rect x="754.4" y="509.7" width="4.8" height="8.5" fill="#3e9a5b"/><rect x="760.5" y="494.7" width="1.4" height="17.1" fill="#3e9a5b"/><rect x="758.8" y="495.5" width="4.8" height="14.2" fill="#3e9a5b"/><rect x="764.8" y="494.4" width="1.4" height="23.2" fill="#ec8147"/><rect x="763.1" y="495.5" width="4.8" height="17.5" fill="#ec8147"/><rect x="769.1" y="501.7" width="1.4" height="13.2" fill="#3e9a5b"/><rect x="767.4" y="505.0" width="4.8" height="8.1" fill="#3e9a5b"/><rect x="773.5" y="493.7" width="1.4" height="15.1" fill="#3e9a5b"/><rect x="771.8" y="495.4" width="4.8" height="9.6" fill="#3e9a5b"/><rect x="777.8" y="491.9" width="1.4" height="11.4" fill="#ec8147"/><rect x="776.1" y="495.4" width="4.8" height="7.0" fill="#ec8147"/><rect x="782.2" y="501.7" width="1.4" height="9.0" fill="#ec8147"/><rect x="780.5" y="502.4" width="4.8" height="8.1" fill="#ec8147"/><rect x="786.5" y="509.3" width="1.4" height="5.9" fill="#3e9a5b"/><rect x="784.8" y="509.4" width="4.8" height="3.0" fill="#3e9a5b"/><rect x="790.8" y="507.4" width="1.4" height="7.5" fill="#ec8147"/><rect x="789.1" y="509.4" width="4.8" height="3.0" fill="#ec8147"/><rect x="795.2" y="503.4" width="1.4" height="16.8" fill="#ec8147"/><rect x="793.5" y="509.5" width="4.8" height="4.8" fill="#ec8147"/><rect x="799.5" y="513.3" width="1.4" height="30.6" fill="#ec8147"/><rect x="797.8" y="514.3" width="4.8" height="28.1" fill="#ec8147"/><rect x="803.9" y="539.9" width="1.4" height="52.5" fill="#ec8147"/><rect x="802.2" y="542.4" width="4.8" height="47.6" fill="#ec8147"/><rect x="808.2" y="576.8" width="1.4" height="15.8" fill="#3e9a5b"/><rect x="806.5" y="579.2" width="4.8" height="10.8" fill="#3e9a5b"/><rect x="812.5" y="579.2" width="1.4" height="7.0" fill="#ec8147"/><rect x="810.8" y="579.2" width="4.8" height="4.6" fill="#ec8147"/><rect x="816.9" y="575.2" width="1.4" height="9.7" fill="#3e9a5b"/><rect x="815.2" y="575.4" width="4.8" height="8.4" fill="#3e9a5b"/><rect x="821.2" y="571.5" width="1.4" height="9.5" fill="#ec8147"/><rect x="819.5" y="575.4" width="4.8" height="3.7" fill="#ec8147"/><rect x="825.6" y="579.1" width="1.4" height="8.6" fill="#ec8147"/><rect x="823.9" y="579.2" width="4.8" height="5.9" fill="#ec8147"/><rect x="829.9" y="557.8" width="1.4" height="33.3" fill="#3e9a5b"/><rect x="828.2" y="558.0" width="4.8" height="27.0" fill="#3e9a5b"/><rect x="834.2" y="553.2" width="1.4" height="22.2" fill="#ec8147"/><rect x="832.5" y="558.0" width="4.8" height="13.2" fill="#ec8147"/><rect x="838.6" y="549.3" width="1.4" height="26.0" fill="#3e9a5b"/><rect x="836.9" y="555.0" width="4.8" height="16.2" fill="#3e9a5b"/><rect x="842.9" y="554.8" width="1.4" height="13.9" fill="#ec8147"/><rect x="841.2" y="555.0" width="4.8" height="12.6" fill="#ec8147"/><rect x="847.3" y="563.8" width="1.4" height="20.6" fill="#ec8147"/><rect x="845.6" y="567.6" width="4.8" height="16.7" fill="#ec8147"/><rect x="851.6" y="577.6" width="1.4" height="7.7" fill="#3e9a5b"/><rect x="849.9" y="577.9" width="4.8" height="6.4" fill="#3e9a5b"/><rect x="855.9" y="577.1" width="1.4" height="14.2" fill="#ec8147"/><rect x="854.2" y="577.9" width="4.8" height="10.2" fill="#ec8147"/><rect x="860.3" y="586.4" width="1.4" height="10.2" fill="#ec8147"/><rect x="858.6" y="588.1" width="4.8" height="3.0" fill="#ec8147"/><rect x="864.6" y="589.1" width="1.4" height="8.6" fill="#ec8147"/><rect x="862.9" y="589.5" width="4.8" height="6.5" fill="#ec8147"/><rect x="869.0" y="580.7" width="1.4" height="16.6" fill="#3e9a5b"/><rect x="867.3" y="583.9" width="4.8" height="12.1" fill="#3e9a5b"/><rect x="873.3" y="582.1" width="1.4" height="6.8" fill="#ec8147"/><rect x="871.6" y="583.9" width="4.8" height="3.0" fill="#ec8147"/><rect x="877.6" y="582.6" width="1.4" height="12.2" fill="#ec8147"/><rect x="875.9" y="585.1" width="4.8" height="9.7" fill="#ec8147"/><rect x="882.0" y="588.3" width="1.4" height="11.4" fill="#ec8147"/><rect x="880.3" y="594.8" width="4.8" height="3.0" fill="#ec8147"/><rect x="886.3" y="574.1" width="1.4" height="24.5" fill="#3e9a5b"/><rect x="884.6" y="574.7" width="4.8" height="22.5" fill="#3e9a5b"/><rect x="890.7" y="563.8" width="1.4" height="11.1" fill="#3e9a5b"/><rect x="889.0" y="565.1" width="4.8" height="9.6" fill="#3e9a5b"/><rect x="895.0" y="558.4" width="1.4" height="14.0" fill="#ec8147"/><rect x="893.3" y="565.1" width="4.8" height="4.3" fill="#ec8147"/><rect x="899.3" y="563.0" width="1.4" height="10.3" fill="#3e9a5b"/><rect x="897.6" y="566.6" width="4.8" height="3.0" fill="#3e9a5b"/><rect x="903.7" y="564.3" width="1.4" height="10.7" fill="#ec8147"/><rect x="902.0" y="566.6" width="4.8" height="6.2" fill="#ec8147"/><rect x="908.0" y="571.7" width="1.4" height="6.8" fill="#ec8147"/><rect x="906.3" y="572.8" width="4.8" height="4.0" fill="#ec8147"/><rect x="912.4" y="567.3" width="1.4" height="9.5" fill="#3e9a5b"/><rect x="910.7" y="572.2" width="4.8" height="4.5" fill="#3e9a5b"/><rect x="916.7" y="570.4" width="1.4" height="6.1" fill="#ec8147"/><rect x="915.0" y="572.2" width="4.8" height="3.9" fill="#ec8147"/><rect x="921.0" y="573.1" width="1.4" height="8.3" fill="#ec8147"/><rect x="919.3" y="576.2" width="4.8" height="3.0" fill="#ec8147"/><rect x="925.4" y="575.9" width="1.4" height="9.4" fill="#ec8147"/><rect x="923.7" y="577.9" width="4.8" height="7.0" fill="#ec8147"/><rect x="929.7" y="560.2" width="1.4" height="25.8" fill="#3e9a5b"/><rect x="928.0" y="565.6" width="4.8" height="19.3" fill="#3e9a5b"/><rect x="934.1" y="562.8" width="1.4" height="5.5" fill="#3e9a5b"/><rect x="932.4" y="565.2" width="4.8" height="3.0" fill="#3e9a5b"/><rect x="938.4" y="550.9" width="1.4" height="19.4" fill="#3e9a5b"/><rect x="936.7" y="557.1" width="4.8" height="8.1" fill="#3e9a5b"/><rect x="942.7" y="551.0" width="1.4" height="12.2" fill="#ec8147"/><rect x="941.0" y="557.1" width="4.8" height="3.5" fill="#ec8147"/><rect x="947.1" y="549.2" width="1.4" height="12.7" fill="#3e9a5b"/><rect x="945.4" y="550.7" width="4.8" height="9.9" fill="#3e9a5b"/><rect x="951.4" y="534.5" width="1.4" height="21.4" fill="#3e9a5b"/><rect x="949.7" y="535.3" width="4.8" height="15.5" fill="#3e9a5b"/><rect x="955.8" y="531.7" width="1.4" height="12.5" fill="#ec8147"/><rect x="954.1" y="535.3" width="4.8" height="4.2" fill="#ec8147"/><rect x="960.1" y="535.9" width="1.4" height="10.1" fill="#3e9a5b"/><rect x="958.4" y="537.1" width="4.8" height="3.0" fill="#3e9a5b"/><rect x="964.4" y="536.2" width="1.4" height="25.0" fill="#ec8147"/><rect x="962.7" y="537.1" width="4.8" height="16.3" fill="#ec8147"/><rect x="968.8" y="551.1" width="1.4" height="7.2" fill="#ec8147"/><rect x="967.1" y="553.4" width="4.8" height="3.0" fill="#ec8147"/><rect x="973.1" y="551.5" width="1.4" height="22.1" fill="#ec8147"/><rect x="971.4" y="555.1" width="4.8" height="14.4" fill="#ec8147"/><rect x="977.5" y="568.6" width="1.4" height="14.2" fill="#ec8147"/><rect x="975.8" y="569.5" width="4.8" height="8.7" fill="#ec8147"/><rect x="981.8" y="576.3" width="1.4" height="20.5" fill="#ec8147"/><rect x="980.1" y="578.2" width="4.8" height="17.0" fill="#ec8147"/><rect x="986.1" y="594.9" width="1.4" height="25.2" fill="#ec8147"/><rect x="984.4" y="595.2" width="4.8" height="23.7" fill="#ec8147"/><rect x="990.5" y="614.1" width="1.4" height="21.4" fill="#ec8147"/><rect x="988.8" y="618.9" width="4.8" height="15.3" fill="#ec8147"/><rect x="994.8" y="631.6" width="1.4" height="5.9" fill="#ec8147"/><rect x="993.1" y="634.2" width="4.8" height="3.0" fill="#ec8147"/><rect x="999.2" y="629.1" width="1.4" height="9.6" fill="#ec8147"/><rect x="997.5" y="634.4" width="4.8" height="3.0" fill="#ec8147"/><rect x="1003.5" y="631.7" width="1.4" height="10.4" fill="#3e9a5b"/><rect x="1001.8" y="632.4" width="4.8" height="4.5" fill="#3e9a5b"/><rect x="1007.8" y="630.1" width="1.4" height="6.7" fill="#ec8147"/><rect x="1006.1" y="632.4" width="4.8" height="3.0" fill="#ec8147"/><rect x="1012.2" y="617.2" width="1.4" height="16.1" fill="#3e9a5b"/><rect x="1010.5" y="624.1" width="4.8" height="9.0" fill="#3e9a5b"/><rect x="1016.5" y="622.2" width="1.4" height="10.7" fill="#ec8147"/><rect x="1014.8" y="624.1" width="4.8" height="5.7" fill="#ec8147"/><rect x="1020.9" y="622.7" width="1.4" height="8.7" fill="#3e9a5b"/><rect x="1019.2" y="624.8" width="4.8" height="5.0" fill="#3e9a5b"/><rect x="1025.2" y="609.4" width="1.4" height="15.5" fill="#3e9a5b"/><rect x="1023.5" y="611.8" width="4.8" height="13.1" fill="#3e9a5b"/><rect x="1029.5" y="611.2" width="1.4" height="20.7" fill="#ec8147"/><rect x="1027.8" y="611.8" width="4.8" height="19.0" fill="#ec8147"/><rect x="1033.9" y="627.4" width="1.4" height="9.9" fill="#3e9a5b"/><rect x="1032.2" y="628.5" width="4.8" height="3.0" fill="#3e9a5b"/><rect x="1038.2" y="620.2" width="1.4" height="15.5" fill="#ec8147"/><rect x="1036.5" y="628.5" width="4.8" height="5.0" fill="#ec8147"/><rect x="1042.6" y="632.9" width="1.4" height="14.4" fill="#ec8147"/><rect x="1040.9" y="633.5" width="4.8" height="10.2" fill="#ec8147"/><rect x="1046.9" y="614.4" width="1.4" height="31.4" fill="#3e9a5b"/><rect x="1045.2" y="621.7" width="4.8" height="22.0" fill="#3e9a5b"/><rect x="1051.2" y="619.5" width="1.4" height="14.4" fill="#ec8147"/><rect x="1049.5" y="621.7" width="4.8" height="3.0" fill="#ec8147"/><rect x="1055.6" y="618.2" width="1.4" height="9.0" fill="#3e9a5b"/><rect x="1053.9" y="619.1" width="4.8" height="4.8" fill="#3e9a5b"/><rect x="1059.9" y="613.3" width="1.4" height="14.2" fill="#ec8147"/><rect x="1058.2" y="619.1" width="4.8" height="4.1" fill="#ec8147"/><rect x="1064.3" y="605.7" width="1.4" height="20.3" fill="#3e9a5b"/><rect x="1062.6" y="617.8" width="4.8" height="5.4" fill="#3e9a5b"/><rect x="1068.6" y="609.1" width="1.4" height="16.2" fill="#3e9a5b"/><rect x="1066.9" y="612.4" width="4.8" height="5.4" fill="#3e9a5b"/><rect x="1072.9" y="611.5" width="1.4" height="5.6" fill="#ec8147"/><rect x="1071.2" y="612.4" width="4.8" height="3.0" fill="#ec8147"/><rect x="1077.3" y="606.2" width="1.4" height="9.2" fill="#3e9a5b"/><rect x="1075.6" y="608.4" width="4.8" height="4.8" fill="#3e9a5b"/><rect x="1081.6" y="608.2" width="1.4" height="7.2" fill="#ec8147"/><rect x="1079.9" y="608.4" width="4.8" height="6.4" fill="#ec8147"/><rect x="1086.0" y="613.1" width="1.4" height="9.6" fill="#ec8147"/><rect x="1084.3" y="614.8" width="4.8" height="7.3" fill="#ec8147"/><rect x="1090.3" y="621.0" width="1.4" height="7.6" fill="#3e9a5b"/><rect x="1088.6" y="621.5" width="4.8" height="3.0" fill="#3e9a5b"/><rect x="1094.6" y="619.9" width="1.4" height="11.4" fill="#ec8147"/><rect x="1092.9" y="621.5" width="4.8" height="6.5" fill="#ec8147"/><rect x="1099.0" y="626.2" width="1.4" height="9.7" fill="#3e9a5b"/><rect x="1097.3" y="627.4" width="4.8" height="3.0" fill="#3e9a5b"/><rect x="1103.3" y="626.3" width="1.4" height="11.6" fill="#ec8147"/><rect x="1101.6" y="627.4" width="4.8" height="7.3" fill="#ec8147"/><rect x="1107.7" y="629.9" width="1.4" height="10.3" fill="#3e9a5b"/><rect x="1106.0" y="630.4" width="4.8" height="4.3" fill="#3e9a5b"/><rect x="1112.0" y="630.3" width="1.4" height="7.9" fill="#ec8147"/><rect x="1110.3" y="630.4" width="4.8" height="6.8" fill="#ec8147"/><rect x="1116.3" y="626.4" width="1.4" height="13.1" fill="#3e9a5b"/><rect x="1114.6" y="626.7" width="4.8" height="10.5" fill="#3e9a5b"/><rect x="1120.7" y="611.7" width="1.4" height="22.5" fill="#3e9a5b"/><rect x="1119.0" y="611.8" width="4.8" height="14.9" fill="#3e9a5b"/><rect x="1125.0" y="598.7" width="1.4" height="17.7" fill="#3e9a5b"/><rect x="1123.3" y="601.1" width="4.8" height="10.7" fill="#3e9a5b"/><rect x="1129.4" y="590.3" width="1.4" height="16.3" fill="#3e9a5b"/><rect x="1127.7" y="590.7" width="4.8" height="10.4" fill="#3e9a5b"/><rect x="1133.7" y="579.5" width="1.4" height="17.1" fill="#3e9a5b"/><rect x="1132.0" y="582.0" width="4.8" height="8.7" fill="#3e9a5b"/><rect x="1138.0" y="577.8" width="1.4" height="9.8" fill="#ec8147"/><rect x="1136.3" y="582.0" width="4.8" height="3.0" fill="#ec8147"/><rect x="1142.4" y="583.0" width="1.4" height="3.7" fill="#ec8147"/><rect x="1140.7" y="583.3" width="4.8" height="3.0" fill="#ec8147"/><rect x="1146.7" y="577.2" width="1.4" height="18.3" fill="#ec8147"/><rect x="1145.0" y="585.5" width="4.8" height="7.6" fill="#ec8147"/><rect x="1151.1" y="580.5" width="1.4" height="16.3" fill="#3e9a5b"/><rect x="1149.4" y="582.3" width="4.8" height="10.9" fill="#3e9a5b"/><rect x="1155.4" y="580.3" width="1.4" height="7.9" fill="#ec8147"/><rect x="1153.7" y="582.3" width="4.8" height="4.9" fill="#ec8147"/><rect x="1159.7" y="581.8" width="1.4" height="11.1" fill="#ec8147"/><rect x="1158.0" y="587.2" width="4.8" height="3.0" fill="#ec8147"/><rect x="1164.1" y="568.1" width="1.4" height="21.2" fill="#3e9a5b"/><rect x="1162.4" y="570.5" width="4.8" height="16.9" fill="#3e9a5b"/><rect x="1168.4" y="567.5" width="1.4" height="6.4" fill="#ec8147"/><rect x="1166.7" y="570.5" width="4.8" height="3.1" fill="#ec8147"/><rect x="1172.8" y="571.2" width="1.4" height="10.4" fill="#3e9a5b"/><rect x="1171.1" y="573.1" width="4.8" height="3.0" fill="#3e9a5b"/><rect x="1177.1" y="571.9" width="1.4" height="8.6" fill="#ec8147"/><rect x="1175.4" y="573.1" width="4.8" height="3.0" fill="#ec8147"/><rect x="1181.4" y="570.1" width="1.4" height="16.2" fill="#ec8147"/><rect x="1179.7" y="574.6" width="4.8" height="3.0" fill="#ec8147"/><rect x="1185.8" y="567.9" width="1.4" height="19.7" fill="#ec8147"/><rect x="1184.1" y="574.9" width="4.8" height="12.7" fill="#ec8147"/><rect x="1190.1" y="567.2" width="1.4" height="22.7" fill="#3e9a5b"/><rect x="1188.4" y="570.6" width="4.8" height="17.0" fill="#3e9a5b"/><rect x="1194.5" y="551.5" width="1.4" height="19.5" fill="#3e9a5b"/><rect x="1192.8" y="555.2" width="4.8" height="15.4" fill="#3e9a5b"/><rect x="1198.8" y="551.4" width="1.4" height="10.4" fill="#ec8147"/><rect x="1197.1" y="555.2" width="4.8" height="3.0" fill="#ec8147"/><rect x="1203.1" y="542.7" width="1.4" height="16.1" fill="#3e9a5b"/><rect x="1201.4" y="549.4" width="4.8" height="8.4" fill="#3e9a5b"/><rect x="1207.5" y="545.1" width="1.4" height="7.0" fill="#3e9a5b"/><rect x="1205.8" y="546.6" width="4.8" height="3.0" fill="#3e9a5b"/><rect x="1211.8" y="543.4" width="1.4" height="4.6" fill="#3e9a5b"/><rect x="1210.1" y="544.8" width="4.8" height="3.0" fill="#3e9a5b"/><rect x="1216.2" y="544.8" width="1.4" height="5.8" fill="#ec8147"/><rect x="1214.5" y="544.8" width="4.8" height="3.2" fill="#ec8147"/><rect x="1220.5" y="542.0" width="1.4" height="25.4" fill="#ec8147"/><rect x="1218.8" y="548.0" width="4.8" height="16.7" fill="#ec8147"/><rect x="1224.8" y="550.0" width="1.4" height="21.3" fill="#3e9a5b"/><rect x="1223.1" y="558.7" width="4.8" height="5.9" fill="#3e9a5b"/><rect x="1229.2" y="556.8" width="1.4" height="4.9" fill="#3e9a5b"/><rect x="1227.5" y="556.9" width="4.8" height="3.0" fill="#3e9a5b"/><rect x="1233.5" y="553.1" width="1.4" height="4.7" fill="#3e9a5b"/><rect x="1231.8" y="554.8" width="4.8" height="3.0" fill="#3e9a5b"/><rect x="1237.9" y="553.7" width="1.4" height="8.2" fill="#ec8147"/><rect x="1236.2" y="554.8" width="4.8" height="3.0" fill="#ec8147"/><rect x="1242.2" y="552.4" width="1.4" height="7.9" fill="#ec8147"/><rect x="1240.5" y="555.2" width="4.8" height="4.3" fill="#ec8147"/><rect x="1246.5" y="558.0" width="1.4" height="27.3" fill="#ec8147"/><rect x="1244.8" y="559.6" width="4.8" height="21.2" fill="#ec8147"/><rect x="1250.9" y="577.7" width="1.4" height="7.5" fill="#ec8147"/><rect x="1249.2" y="580.8" width="4.8" height="3.0" fill="#ec8147"/><rect x="1255.2" y="580.5" width="1.4" height="9.5" fill="#ec8147"/><rect x="1253.5" y="583.3" width="4.8" height="6.3" fill="#ec8147"/><rect x="1259.6" y="588.0" width="1.4" height="9.6" fill="#ec8147"/><rect x="1257.9" y="589.6" width="4.8" height="7.5" fill="#ec8147"/><rect x="1263.9" y="575.8" width="1.4" height="21.9" fill="#3e9a5b"/><rect x="1262.2" y="578.6" width="4.8" height="18.4" fill="#3e9a5b"/><rect x="1268.2" y="577.1" width="1.4" height="15.7" fill="#ec8147"/><rect x="1266.5" y="578.6" width="4.8" height="12.3" fill="#ec8147"/><rect x="1272.6" y="584.2" width="1.4" height="9.1" fill="#3e9a5b"/><rect x="1270.9" y="589.0" width="4.8" height="3.0" fill="#3e9a5b"/><rect x="1276.9" y="584.8" width="1.4" height="6.3" fill="#3e9a5b"/><rect x="1275.2" y="587.9" width="4.8" height="3.0" fill="#3e9a5b"/><rect x="1281.3" y="585.9" width="1.4" height="7.5" fill="#ec8147"/><rect x="1279.6" y="587.9" width="4.8" height="4.6" fill="#ec8147"/><rect x="1285.6" y="591.2" width="1.4" height="15.9" fill="#ec8147"/><rect x="1283.9" y="592.5" width="4.8" height="10.4" fill="#ec8147"/><rect x="1289.9" y="602.3" width="1.4" height="7.1" fill="#ec8147"/><rect x="1288.2" y="602.9" width="4.8" height="3.0" fill="#ec8147"/><rect x="1294.3" y="603.4" width="1.4" height="5.2" fill="#ec8147"/><rect x="1292.6" y="604.4" width="4.8" height="3.0" fill="#ec8147"/><rect x="1298.6" y="600.7" width="1.4" height="10.0" fill="#3e9a5b"/><rect x="1296.9" y="605.3" width="4.8" height="3.0" fill="#3e9a5b"/><rect x="1303.0" y="597.4" width="1.4" height="16.0" fill="#3e9a5b"/><rect x="1301.3" y="600.5" width="4.8" height="4.8" fill="#3e9a5b"/><rect x="1307.3" y="586.2" width="1.4" height="16.6" fill="#3e9a5b"/><rect x="1305.6" y="590.3" width="4.8" height="10.2" fill="#3e9a5b"/><rect x="1311.6" y="582.6" width="1.4" height="21.2" fill="#ec8147"/><rect x="1309.9" y="590.3" width="4.8" height="4.5" fill="#ec8147"/><rect x="1316.0" y="581.6" width="1.4" height="13.6" fill="#3e9a5b"/><rect x="1314.3" y="583.4" width="4.8" height="11.5" fill="#3e9a5b"/><rect x="1320.3" y="568.8" width="1.4" height="14.9" fill="#3e9a5b"/><rect x="1318.6" y="576.3" width="4.8" height="7.1" fill="#3e9a5b"/><rect x="1324.7" y="568.3" width="1.4" height="14.0" fill="#3e9a5b"/><rect x="1323.0" y="571.3" width="4.8" height="5.0" fill="#3e9a5b"/><rect x="1329.0" y="569.3" width="1.4" height="25.6" fill="#ec8147"/><rect x="1327.3" y="571.3" width="4.8" height="23.1" fill="#ec8147"/><rect x="1333.3" y="593.9" width="1.4" height="10.3" fill="#ec8147"/><rect x="1331.6" y="594.3" width="4.8" height="5.0" fill="#ec8147"/><rect x="1337.7" y="570.5" width="1.4" height="31.4" fill="#3e9a5b"/><rect x="1336.0" y="574.7" width="4.8" height="24.7" fill="#3e9a5b"/><rect x="1342.0" y="556.1" width="1.4" height="20.3" fill="#3e9a5b"/><rect x="1340.3" y="559.1" width="4.8" height="15.6" fill="#3e9a5b"/><rect x="1346.4" y="551.2" width="1.4" height="12.0" fill="#ec8147"/><rect x="1344.7" y="559.1" width="4.8" height="3.0" fill="#ec8147"/><rect x="1350.7" y="552.2" width="1.4" height="12.9" fill="#3e9a5b"/><rect x="1349.0" y="554.8" width="4.8" height="7.3" fill="#3e9a5b"/><rect x="1355.0" y="494.1" width="1.4" height="62.4" fill="#3e9a5b"/><rect x="1353.3" y="494.6" width="4.8" height="60.1" fill="#3e9a5b"/><rect x="1359.4" y="491.3" width="1.4" height="7.5" fill="#ec8147"/><rect x="1357.7" y="494.6" width="4.8" height="3.0" fill="#ec8147"/><rect x="1363.7" y="470.1" width="1.4" height="28.5" fill="#3e9a5b"/><rect x="1362.0" y="473.2" width="4.8" height="23.8" fill="#3e9a5b"/><rect x="1368.1" y="470.5" width="1.4" height="8.4" fill="#ec8147"/><rect x="1366.4" y="473.2" width="4.8" height="4.7" fill="#ec8147"/><rect x="1372.4" y="473.3" width="1.4" height="7.1" fill="#3e9a5b"/><rect x="1370.7" y="473.9" width="4.8" height="4.1" fill="#3e9a5b"/><rect x="1376.7" y="467.2" width="1.4" height="7.9" fill="#3e9a5b"/><rect x="1375.0" y="471.0" width="4.8" height="3.0" fill="#3e9a5b"/><rect x="1381.1" y="470.3" width="1.4" height="13.7" fill="#ec8147"/><rect x="1379.4" y="471.0" width="4.8" height="9.5" fill="#ec8147"/><rect x="1385.4" y="480.2" width="1.4" height="5.3" fill="#ec8147"/><rect x="1383.7" y="480.6" width="4.8" height="3.0" fill="#ec8147"/><rect x="1389.8" y="481.3" width="1.4" height="23.6" fill="#ec8147"/><rect x="1388.1" y="482.5" width="4.8" height="15.0" fill="#ec8147"/><rect x="1394.1" y="496.3" width="1.4" height="17.9" fill="#ec8147"/><rect x="1392.4" y="497.5" width="4.8" height="16.7" fill="#ec8147"/><rect x="1398.4" y="513.3" width="1.4" height="5.4" fill="#ec8147"/><rect x="1396.7" y="514.2" width="4.8" height="3.0" fill="#ec8147"/><rect x="1402.8" y="510.2" width="1.4" height="7.8" fill="#3e9a5b"/><rect x="1401.1" y="512.8" width="4.8" height="3.1" fill="#3e9a5b"/><rect x="1407.1" y="508.7" width="1.4" height="9.3" fill="#ec8147"/><rect x="1405.4" y="512.8" width="4.8" height="3.0" fill="#ec8147"/><rect x="1411.5" y="500.6" width="1.4" height="18.1" fill="#3e9a5b"/><rect x="1409.8" y="502.9" width="4.8" height="12.2" fill="#3e9a5b"/><rect x="1415.8" y="498.1" width="1.4" height="8.5" fill="#ec8147"/><rect x="1414.1" y="502.9" width="4.8" height="3.0" fill="#ec8147"/><rect x="1420.1" y="491.0" width="1.4" height="13.4" fill="#3e9a5b"/><rect x="1418.4" y="491.1" width="4.8" height="12.8" fill="#3e9a5b"/><rect x="1424.5" y="475.5" width="1.4" height="16.2" fill="#3e9a5b"/><rect x="1422.8" y="477.7" width="4.8" height="13.5" fill="#3e9a5b"/><rect x="1428.8" y="477.4" width="1.4" height="10.9" fill="#ec8147"/><rect x="1427.1" y="477.7" width="4.8" height="8.1" fill="#ec8147"/><rect x="1433.2" y="482.6" width="1.4" height="18.5" fill="#ec8147"/><rect x="1431.5" y="485.8" width="4.8" height="13.3" fill="#ec8147"/><rect x="1437.5" y="495.8" width="1.4" height="4.2" fill="#3e9a5b"/><rect x="1435.8" y="495.8" width="4.8" height="3.2" fill="#3e9a5b"/><rect x="1441.8" y="495.2" width="1.4" height="9.7" fill="#ec8147"/><rect x="1440.1" y="495.8" width="4.8" height="3.0" fill="#ec8147"/><rect x="1446.2" y="496.1" width="1.4" height="6.5" fill="#ec8147"/><rect x="1444.5" y="496.2" width="4.8" height="3.0" fill="#ec8147"/><rect x="1450.5" y="496.0" width="1.4" height="7.7" fill="#ec8147"/><rect x="1448.8" y="497.8" width="4.8" height="5.3" fill="#ec8147"/><rect x="1454.9" y="494.0" width="1.4" height="29.5" fill="#ec8147"/><rect x="1453.2" y="503.1" width="4.8" height="19.6" fill="#ec8147"/><rect x="1459.2" y="496.8" width="1.4" height="35.3" fill="#3e9a5b"/><rect x="1457.5" y="500.2" width="4.8" height="22.6" fill="#3e9a5b"/><rect x="1463.5" y="490.7" width="1.4" height="11.3" fill="#3e9a5b"/><rect x="1461.8" y="491.1" width="4.8" height="9.1" fill="#3e9a5b"/><rect x="1467.9" y="489.2" width="1.4" height="24.2" fill="#ec8147"/><rect x="1466.2" y="491.1" width="4.8" height="14.4" fill="#ec8147"/><rect x="1472.2" y="504.3" width="1.4" height="16.3" fill="#ec8147"/><rect x="1470.5" y="505.6" width="4.8" height="14.9" fill="#ec8147"/><rect x="1476.6" y="517.6" width="1.4" height="6.9" fill="#3e9a5b"/><rect x="1474.9" y="519.9" width="4.8" height="3.0" fill="#3e9a5b"/><rect x="1480.9" y="518.1" width="1.4" height="23.4" fill="#ec8147"/><rect x="1479.2" y="519.9" width="4.8" height="13.8" fill="#ec8147"/><rect x="1485.2" y="532.9" width="1.4" height="14.8" fill="#ec8147"/><rect x="1483.5" y="533.6" width="4.8" height="11.4" fill="#ec8147"/><rect x="1489.6" y="544.9" width="1.4" height="7.2" fill="#ec8147"/><rect x="1487.9" y="545.0" width="4.8" height="4.9" fill="#ec8147"/><rect x="1493.9" y="545.6" width="1.4" height="26.8" fill="#ec8147"/><rect x="1492.2" y="549.9" width="4.8" height="15.5" fill="#ec8147"/><rect x="1498.3" y="558.7" width="1.4" height="18.2" fill="#ec8147"/><rect x="1496.6" y="565.4" width="4.8" height="8.4" fill="#ec8147"/><rect x="1502.6" y="570.6" width="1.4" height="20.0" fill="#ec8147"/><rect x="1500.9" y="573.9" width="4.8" height="14.0" fill="#ec8147"/><rect x="1506.9" y="567.2" width="1.4" height="23.8" fill="#3e9a5b"/><rect x="1505.2" y="569.7" width="4.8" height="18.2" fill="#3e9a5b"/><rect x="1511.3" y="553.3" width="1.4" height="19.8" fill="#3e9a5b"/><rect x="1509.6" y="559.7" width="4.8" height="10.0" fill="#3e9a5b"/><rect x="1515.6" y="552.9" width="1.4" height="28.4" fill="#ec8147"/><rect x="1513.9" y="559.7" width="4.8" height="19.3" fill="#ec8147"/><rect x="1520.0" y="553.9" width="1.4" height="27.7" fill="#3e9a5b"/><rect x="1518.3" y="554.7" width="4.8" height="24.2" fill="#3e9a5b"/><rect x="1524.3" y="554.5" width="1.4" height="9.2" fill="#ec8147"/><rect x="1522.6" y="554.7" width="4.8" height="5.1" fill="#ec8147"/><rect x="1528.6" y="556.6" width="1.4" height="5.8" fill="#3e9a5b"/><rect x="1526.9" y="558.7" width="4.8" height="3.0" fill="#3e9a5b"/><rect x="1533.0" y="543.8" width="1.4" height="16.0" fill="#3e9a5b"/><rect x="1531.3" y="544.9" width="4.8" height="13.7" fill="#3e9a5b"/><rect x="1537.3" y="524.3" width="1.4" height="28.4" fill="#3e9a5b"/><rect x="1535.6" y="530.7" width="4.8" height="14.2" fill="#3e9a5b"/><rect x="1541.7" y="514.5" width="1.4" height="16.3" fill="#3e9a5b"/><rect x="1540.0" y="517.2" width="4.8" height="13.5" fill="#3e9a5b"/><rect x="1546.0" y="515.2" width="1.4" height="5.4" fill="#ec8147"/><rect x="1544.3" y="517.2" width="4.8" height="3.0" fill="#ec8147"/><rect x="1550.3" y="504.8" width="1.4" height="20.6" fill="#3e9a5b"/><rect x="1548.6" y="507.3" width="4.8" height="10.7" fill="#3e9a5b"/><rect x="1554.7" y="505.2" width="1.4" height="6.6" fill="#3e9a5b"/><rect x="1553.0" y="506.9" width="4.8" height="3.0" fill="#3e9a5b"/><rect x="1559.0" y="506.3" width="1.4" height="6.9" fill="#ec8147"/><rect x="1557.3" y="506.9" width="4.8" height="3.0" fill="#ec8147"/><rect x="1563.4" y="504.9" width="1.4" height="10.7" fill="#ec8147"/><rect x="1561.7" y="507.5" width="4.8" height="6.1" fill="#ec8147"/><rect x="1567.7" y="509.0" width="1.4" height="13.1" fill="#ec8147"/><rect x="1566.0" y="513.6" width="4.8" height="6.5" fill="#ec8147"/><rect x="1572.0" y="516.3" width="1.4" height="8.6" fill="#3e9a5b"/><rect x="1570.3" y="519.1" width="4.8" height="3.0" fill="#3e9a5b"/><rect x="1576.4" y="512.9" width="1.4" height="19.3" fill="#ec8147"/><rect x="1574.7" y="519.1" width="4.8" height="13.1" fill="#ec8147"/><rect x="1580.7" y="519.0" width="1.4" height="16.0" fill="#3e9a5b"/><rect x="1579.0" y="523.1" width="4.8" height="9.1" fill="#3e9a5b"/><rect x="1585.1" y="517.3" width="1.4" height="9.7" fill="#3e9a5b"/><rect x="1583.4" y="521.8" width="4.8" height="3.0" fill="#3e9a5b"/><rect x="1589.4" y="508.4" width="1.4" height="13.8" fill="#3e9a5b"/><rect x="1587.7" y="513.4" width="4.8" height="8.4" fill="#3e9a5b"/><rect x="1593.7" y="496.4" width="1.4" height="19.3" fill="#3e9a5b"/><rect x="1592.0" y="497.7" width="4.8" height="15.7" fill="#3e9a5b"/><rect x="1598.1" y="482.9" width="1.4" height="17.0" fill="#3e9a5b"/><rect x="1596.4" y="488.2" width="4.8" height="9.5" fill="#3e9a5b"/><rect x="1602.4" y="479.5" width="1.4" height="14.7" fill="#3e9a5b"/><rect x="1600.7" y="487.1" width="4.8" height="3.0" fill="#3e9a5b"/><rect x="1606.8" y="481.8" width="1.4" height="6.8" fill="#3e9a5b"/><rect x="1605.1" y="483.9" width="4.8" height="3.2" fill="#3e9a5b"/><rect x="1611.1" y="481.7" width="1.4" height="10.1" fill="#ec8147"/><rect x="1609.4" y="483.9" width="4.8" height="3.5" fill="#ec8147"/><rect x="1615.4" y="473.3" width="1.4" height="14.8" fill="#3e9a5b"/><rect x="1613.7" y="475.1" width="4.8" height="12.3" fill="#3e9a5b"/><rect x="1619.8" y="470.6" width="1.4" height="12.6" fill="#ec8147"/><rect x="1618.1" y="475.1" width="4.8" height="3.0" fill="#ec8147"/><rect x="1624.1" y="475.1" width="1.4" height="5.8" fill="#3e9a5b"/><rect x="1622.4" y="476.0" width="4.8" height="3.0" fill="#3e9a5b"/><rect x="1628.5" y="473.2" width="1.4" height="13.2" fill="#ec8147"/><rect x="1626.8" y="476.0" width="4.8" height="3.4" fill="#ec8147"/><rect x="1632.8" y="478.3" width="1.4" height="15.7" fill="#ec8147"/><rect x="1631.1" y="479.4" width="4.8" height="9.2" fill="#ec8147"/><rect x="1637.1" y="488.3" width="1.4" height="10.0" fill="#ec8147"/><rect x="1635.4" y="488.6" width="4.8" height="9.6" fill="#ec8147"/><rect x="1641.5" y="475.7" width="1.4" height="26.3" fill="#3e9a5b"/><rect x="1639.8" y="475.9" width="4.8" height="22.3" fill="#3e9a5b"/><rect x="1645.8" y="474.3" width="1.4" height="4.7" fill="#ec8147"/><rect x="1644.1" y="475.9" width="4.8" height="3.0" fill="#ec8147"/><rect x="1650.2" y="475.0" width="1.4" height="11.0" fill="#ec8147"/><rect x="1648.5" y="478.0" width="4.8" height="3.0" fill="#ec8147"/><rect x="1654.5" y="467.1" width="1.4" height="12.5" fill="#3e9a5b"/><rect x="1652.8" y="473.4" width="4.8" height="5.5" fill="#3e9a5b"/><rect x="1658.8" y="469.0" width="1.4" height="7.8" fill="#3e9a5b"/><rect x="1657.1" y="472.5" width="4.8" height="3.0" fill="#3e9a5b"/><rect x="1663.2" y="468.4" width="1.4" height="12.5" fill="#ec8147"/><rect x="1661.5" y="472.5" width="4.8" height="7.8" fill="#ec8147"/><rect x="1667.5" y="478.0" width="1.4" height="12.7" fill="#ec8147"/><rect x="1665.8" y="480.4" width="4.8" height="9.8" fill="#ec8147"/><rect x="1671.9" y="481.9" width="1.4" height="8.5" fill="#3e9a5b"/><rect x="1670.2" y="482.3" width="4.8" height="7.9" fill="#3e9a5b"/><rect x="1676.2" y="482.0" width="1.4" height="11.7" fill="#ec8147"/><rect x="1674.5" y="482.3" width="4.8" height="3.0" fill="#ec8147"/><rect x="1680.5" y="476.7" width="1.4" height="10.4" fill="#3e9a5b"/><rect x="1678.8" y="479.9" width="4.8" height="5.0" fill="#3e9a5b"/><rect x="1684.9" y="472.1" width="1.4" height="15.3" fill="#3e9a5b"/><rect x="1683.2" y="472.7" width="4.8" height="7.2" fill="#3e9a5b"/><rect x="1689.2" y="461.2" width="1.4" height="16.4" fill="#3e9a5b"/><rect x="1687.5" y="465.2" width="4.8" height="7.5" fill="#3e9a5b"/><rect x="1693.6" y="438.6" width="1.4" height="27.8" fill="#3e9a5b"/><rect x="1691.9" y="445.2" width="4.8" height="20.0" fill="#3e9a5b"/><rect x="1697.9" y="437.9" width="1.4" height="14.7" fill="#3e9a5b"/><rect x="1696.2" y="444.4" width="4.8" height="3.0" fill="#3e9a5b"/><rect x="1702.2" y="441.7" width="1.4" height="13.2" fill="#ec8147"/><rect x="1700.5" y="444.4" width="4.8" height="9.2" fill="#ec8147"/><rect x="1706.6" y="448.3" width="1.4" height="14.5" fill="#3e9a5b"/><rect x="1704.9" y="453.0" width="4.8" height="3.0" fill="#3e9a5b"/><rect x="1710.9" y="452.5" width="1.4" height="4.1" fill="#ec8147"/><rect x="1709.2" y="453.0" width="4.8" height="3.0" fill="#ec8147"/><rect x="1715.3" y="449.1" width="1.4" height="9.1" fill="#ec8147"/><rect x="1713.6" y="454.1" width="4.8" height="3.0" fill="#ec8147"/><rect x="1719.6" y="447.4" width="1.4" height="9.7" fill="#3e9a5b"/><rect x="1717.9" y="448.4" width="4.8" height="8.5" fill="#3e9a5b"/><rect x="1723.9" y="436.0" width="1.4" height="14.3" fill="#3e9a5b"/><rect x="1722.2" y="440.6" width="4.8" height="7.8" fill="#3e9a5b"/><rect x="1728.3" y="430.9" width="1.4" height="11.6" fill="#3e9a5b"/><rect x="1726.6" y="435.2" width="4.8" height="5.4" fill="#3e9a5b"/><rect x="1732.6" y="430.3" width="1.4" height="24.4" fill="#ec8147"/><rect x="1730.9" y="435.2" width="4.8" height="16.3" fill="#ec8147"/><rect x="1737.0" y="445.1" width="1.4" height="15.9" fill="#ec8147"/><rect x="1735.3" y="451.5" width="4.8" height="6.6" fill="#ec8147"/><rect x="1741.3" y="453.9" width="1.4" height="40.9" fill="#ec8147"/><rect x="1739.6" y="458.2" width="4.8" height="34.7" fill="#ec8147"/><rect x="1745.6" y="488.2" width="1.4" height="5.3" fill="#3e9a5b"/><rect x="1743.9" y="488.9" width="4.8" height="4.0" fill="#3e9a5b"/><rect x="1750.0" y="483.7" width="1.4" height="12.6" fill="#ec8147"/><rect x="1748.3" y="488.9" width="4.8" height="3.0" fill="#ec8147"/><rect x="1754.3" y="469.6" width="1.4" height="23.5" fill="#3e9a5b"/><rect x="1752.6" y="471.5" width="4.8" height="19.5" fill="#3e9a5b"/><rect x="1758.7" y="470.6" width="1.4" height="7.8" fill="#ec8147"/><rect x="1757.0" y="471.5" width="4.8" height="6.7" fill="#ec8147"/><rect x="1763.0" y="466.3" width="1.4" height="15.2" fill="#3e9a5b"/><rect x="1761.3" y="467.9" width="4.8" height="10.4" fill="#3e9a5b"/><rect x="1767.3" y="467.5" width="1.4" height="4.8" fill="#ec8147"/><rect x="1765.6" y="467.9" width="4.8" height="3.3" fill="#ec8147"/><rect x="1771.7" y="469.1" width="1.4" height="11.5" fill="#ec8147"/><rect x="1770.0" y="471.1" width="4.8" height="7.2" fill="#ec8147"/><rect x="1776.0" y="477.4" width="1.4" height="6.8" fill="#ec8147"/><rect x="1774.3" y="478.3" width="4.8" height="3.0" fill="#ec8147"/><rect x="1780.4" y="459.1" width="1.4" height="20.3" fill="#3e9a5b"/><rect x="1778.7" y="462.6" width="4.8" height="16.1" fill="#3e9a5b"/><rect x="1784.7" y="453.3" width="1.4" height="12.4" fill="#3e9a5b"/><rect x="1783.0" y="455.7" width="4.8" height="6.9" fill="#3e9a5b"/><rect x="1789.0" y="453.3" width="1.4" height="26.1" fill="#ec8147"/><rect x="1787.3" y="455.7" width="4.8" height="23.2" fill="#ec8147"/><rect x="1793.4" y="477.7" width="1.4" height="8.9" fill="#ec8147"/><rect x="1791.7" y="478.8" width="4.8" height="6.8" fill="#ec8147"/><rect x="1797.7" y="481.5" width="1.4" height="5.4" fill="#3e9a5b"/><rect x="1796.0" y="483.9" width="4.8" height="3.0" fill="#3e9a5b"/><rect x="1802.1" y="474.3" width="1.4" height="20.7" fill="#ec8147"/><rect x="1800.4" y="483.9" width="4.8" height="7.0" fill="#ec8147"/><rect x="1806.4" y="484.6" width="1.4" height="9.6" fill="#ec8147"/><rect x="1804.7" y="490.9" width="4.8" height="3.0" fill="#ec8147"/><rect x="1810.7" y="488.9" width="1.4" height="12.5" fill="#ec8147"/><rect x="1809.0" y="492.6" width="4.8" height="5.0" fill="#ec8147"/><rect x="1815.1" y="497.1" width="1.4" height="20.6" fill="#ec8147"/><rect x="1813.4" y="497.6" width="4.8" height="11.7" fill="#ec8147"/><rect x="1819.4" y="501.2" width="1.4" height="9.4" fill="#3e9a5b"/><rect x="1817.7" y="503.6" width="4.8" height="5.7" fill="#3e9a5b"/><rect x="1823.8" y="494.1" width="1.4" height="12.6" fill="#3e9a5b"/><rect x="1822.1" y="498.0" width="4.8" height="5.6" fill="#3e9a5b"/><rect x="1828.1" y="495.0" width="1.4" height="25.1" fill="#ec8147"/><rect x="1826.4" y="498.0" width="4.8" height="20.1" fill="#ec8147"/><rect x="1832.4" y="496.7" width="1.4" height="23.8" fill="#3e9a5b"/><rect x="1830.7" y="499.0" width="4.8" height="19.1" fill="#3e9a5b"/><rect x="1836.8" y="495.9" width="1.4" height="6.2" fill="#3e9a5b"/><rect x="1835.1" y="497.9" width="4.8" height="3.0" fill="#3e9a5b"/><rect x="1841.1" y="497.3" width="1.4" height="4.1" fill="#ec8147"/><rect x="1839.4" y="497.9" width="4.8" height="3.0" fill="#ec8147"/><rect x="1845.5" y="496.4" width="1.4" height="11.7" fill="#ec8147"/><rect x="1843.8" y="499.1" width="4.8" height="5.7" fill="#ec8147"/><rect x="1849.8" y="496.2" width="1.4" height="13.6" fill="#3e9a5b"/><rect x="1848.1" y="501.4" width="4.8" height="3.3" fill="#3e9a5b"/><rect x="1854.1" y="497.6" width="1.4" height="14.6" fill="#ec8147"/><rect x="1852.4" y="501.4" width="4.8" height="5.0" fill="#ec8147"/><rect x="1858.5" y="501.7" width="1.4" height="9.8" fill="#3e9a5b"/><rect x="1856.8" y="501.8" width="4.8" height="4.7" fill="#3e9a5b"/><rect x="1862.8" y="494.0" width="1.4" height="11.5" fill="#3e9a5b"/><rect x="1861.1" y="496.6" width="4.8" height="5.2" fill="#3e9a5b"/><rect x="1867.2" y="493.6" width="1.4" height="23.1" fill="#ec8147"/><rect x="1865.5" y="496.6" width="4.8" height="15.1" fill="#ec8147"/><rect x="1871.5" y="504.7" width="1.4" height="7.6" fill="#3e9a5b"/><rect x="1869.8" y="508.0" width="4.8" height="3.7" fill="#3e9a5b"/><rect x="1875.8" y="491.9" width="1.4" height="18.9" fill="#3e9a5b"/><rect x="1874.1" y="494.6" width="4.8" height="13.4" fill="#3e9a5b"/><rect x="1880.2" y="492.9" width="1.4" height="15.0" fill="#ec8147"/><rect x="1878.5" y="494.6" width="4.8" height="12.2" fill="#ec8147"/><rect x="1884.5" y="504.9" width="1.4" height="12.2" fill="#ec8147"/><rect x="1882.8" y="506.8" width="4.8" height="3.8" fill="#ec8147"/><rect x="1888.9" y="503.3" width="1.4" height="7.5" fill="#3e9a5b"/><rect x="1887.2" y="504.9" width="4.8" height="5.7" fill="#3e9a5b"/><rect x="1893.2" y="502.9" width="1.4" height="5.3" fill="#ec8147"/><rect x="1891.5" y="504.9" width="4.8" height="3.0" fill="#ec8147"/><rect x="1897.5" y="495.6" width="1.4" height="16.2" fill="#3e9a5b"/><rect x="1895.8" y="497.6" width="4.8" height="8.6" fill="#3e9a5b"/><rect x="1901.9" y="488.1" width="1.4" height="15.5" fill="#3e9a5b"/><rect x="1900.2" y="495.3" width="4.8" height="3.0" fill="#3e9a5b"/><rect x="1906.2" y="489.7" width="1.4" height="11.8" fill="#3e9a5b"/><rect x="1904.5" y="491.7" width="4.8" height="3.5" fill="#3e9a5b"/><rect x="1910.6" y="475.3" width="1.4" height="20.1" fill="#3e9a5b"/><rect x="1908.9" y="475.7" width="4.8" height="16.0" fill="#3e9a5b"/><rect x="1914.9" y="464.4" width="1.4" height="13.2" fill="#3e9a5b"/><rect x="1913.2" y="469.1" width="4.8" height="6.6" fill="#3e9a5b"/><rect x="1919.2" y="437.5" width="1.4" height="32.2" fill="#3e9a5b"/><rect x="1917.5" y="438.2" width="4.8" height="30.9" fill="#3e9a5b"/><rect x="1923.6" y="391.9" width="1.4" height="47.8" fill="#3e9a5b"/><rect x="1921.9" y="395.6" width="4.8" height="42.6" fill="#3e9a5b"/><rect x="1927.9" y="392.9" width="1.4" height="8.5" fill="#3e9a5b"/><rect x="1926.2" y="395.6" width="4.8" height="3.0" fill="#3e9a5b"/><rect x="1932.3" y="391.9" width="1.4" height="31.9" fill="#ec8147"/><rect x="1930.6" y="395.6" width="4.8" height="23.4" fill="#ec8147"/><rect x="1936.6" y="415.9" width="1.4" height="16.7" fill="#ec8147"/><rect x="1934.9" y="419.0" width="4.8" height="11.6" fill="#ec8147"/><rect x="1940.9" y="416.0" width="1.4" height="16.8" fill="#3e9a5b"/><rect x="1939.2" y="418.6" width="4.8" height="12.0" fill="#3e9a5b"/><rect x="1945.3" y="417.3" width="1.4" height="23.9" fill="#ec8147"/><rect x="1943.6" y="418.6" width="4.8" height="15.5" fill="#ec8147"/><rect x="1949.6" y="428.7" width="1.4" height="17.4" fill="#ec8147"/><rect x="1947.9" y="434.1" width="4.8" height="8.8" fill="#ec8147"/><rect x="1954.0" y="436.0" width="1.4" height="9.9" fill="#3e9a5b"/><rect x="1952.3" y="438.5" width="4.8" height="4.5" fill="#3e9a5b"/><rect x="1958.3" y="433.9" width="1.4" height="14.6" fill="#ec8147"/><rect x="1956.6" y="438.5" width="4.8" height="7.1" fill="#ec8147"/><rect x="1962.6" y="444.5" width="1.4" height="17.1" fill="#ec8147"/><rect x="1960.9" y="445.6" width="4.8" height="10.6" fill="#ec8147"/><rect x="1967.0" y="447.1" width="1.4" height="12.4" fill="#3e9a5b"/><rect x="1965.3" y="449.0" width="4.8" height="7.1" fill="#3e9a5b"/><rect x="1971.3" y="446.4" width="1.4" height="9.7" fill="#ec8147"/><rect x="1969.6" y="449.0" width="4.8" height="4.6" fill="#ec8147"/><rect x="1975.7" y="434.3" width="1.4" height="21.4" fill="#3e9a5b"/><rect x="1974.0" y="441.5" width="4.8" height="12.1" fill="#3e9a5b"/><rect x="1980.0" y="440.9" width="1.4" height="18.4" fill="#ec8147"/><rect x="1978.3" y="441.5" width="4.8" height="14.4" fill="#ec8147"/><rect x="1984.3" y="433.0" width="1.4" height="27.2" fill="#3e9a5b"/><rect x="1982.6" y="433.6" width="4.8" height="22.3" fill="#3e9a5b"/><rect x="1988.7" y="430.3" width="1.4" height="19.4" fill="#ec8147"/><rect x="1987.0" y="433.6" width="4.8" height="11.0" fill="#ec8147"/><rect x="1993.0" y="443.0" width="1.4" height="8.2" fill="#ec8147"/><rect x="1991.3" y="444.6" width="4.8" height="3.0" fill="#ec8147"/><rect x="1997.4" y="441.4" width="1.4" height="9.8" fill="#ec8147"/><rect x="1995.7" y="446.8" width="4.8" height="3.0" fill="#ec8147"/><rect x="2001.7" y="436.4" width="1.4" height="12.7" fill="#3e9a5b"/><rect x="2000.0" y="436.7" width="4.8" height="10.3" fill="#3e9a5b"/><rect x="2006.0" y="429.6" width="1.4" height="14.7" fill="#ec8147"/><rect x="2004.3" y="436.7" width="4.8" height="3.0" fill="#ec8147"/><rect x="2010.4" y="433.8" width="1.4" height="21.3" fill="#ec8147"/><rect x="2008.7" y="439.0" width="4.8" height="11.5" fill="#ec8147"/><rect x="2014.7" y="443.3" width="1.4" height="24.9" fill="#ec8147"/><rect x="2013.0" y="450.5" width="4.8" height="10.6" fill="#ec8147"/><rect x="2019.1" y="455.8" width="1.4" height="5.8" fill="#3e9a5b"/><rect x="2017.4" y="456.8" width="4.8" height="4.3" fill="#3e9a5b"/><rect x="2023.4" y="453.2" width="1.4" height="8.7" fill="#ec8147"/><rect x="2021.7" y="456.8" width="4.8" height="4.8" fill="#ec8147"/><rect x="2027.7" y="439.5" width="1.4" height="23.8" fill="#3e9a5b"/><rect x="2026.0" y="442.0" width="4.8" height="19.5" fill="#3e9a5b"/><rect x="2032.1" y="441.1" width="1.4" height="14.1" fill="#ec8147"/><rect x="2030.4" y="442.0" width="4.8" height="7.5" fill="#ec8147"/><rect x="2036.4" y="447.9" width="1.4" height="5.8" fill="#ec8147"/><rect x="2034.7" y="449.5" width="4.8" height="3.0" fill="#ec8147"/><rect x="2040.8" y="450.5" width="1.4" height="6.4" fill="#ec8147"/><rect x="2039.1" y="452.4" width="4.8" height="3.0" fill="#ec8147"/><rect x="2045.1" y="447.5" width="1.4" height="9.2" fill="#3e9a5b"/><rect x="2043.4" y="451.9" width="4.8" height="3.0" fill="#3e9a5b"/><rect x="2049.4" y="428.6" width="1.4" height="24.1" fill="#3e9a5b"/><rect x="2047.7" y="433.1" width="4.8" height="18.8" fill="#3e9a5b"/><rect x="2053.8" y="424.1" width="1.4" height="21.9" fill="#ec8147"/><rect x="2052.1" y="433.1" width="4.8" height="10.0" fill="#ec8147"/><rect x="2058.1" y="440.3" width="1.4" height="18.6" fill="#ec8147"/><rect x="2056.4" y="443.0" width="4.8" height="10.0" fill="#ec8147"/><rect x="2062.5" y="445.3" width="1.4" height="9.5" fill="#3e9a5b"/><rect x="2060.8" y="445.8" width="4.8" height="7.2" fill="#3e9a5b"/><rect x="2066.8" y="444.2" width="1.4" height="10.1" fill="#ec8147"/><rect x="2065.1" y="445.8" width="4.8" height="5.6" fill="#ec8147"/><rect x="2071.1" y="449.2" width="1.4" height="8.6" fill="#ec8147"/><rect x="2069.4" y="451.5" width="4.8" height="4.5" fill="#ec8147"/><rect x="2075.5" y="453.9" width="1.4" height="7.2" fill="#ec8147"/><rect x="2073.8" y="455.9" width="4.8" height="4.1" fill="#ec8147"/><rect x="2079.8" y="460.0" width="1.4" height="13.1" fill="#ec8147"/><rect x="2078.1" y="460.1" width="4.8" height="12.5" fill="#ec8147"/><rect x="2084.2" y="466.4" width="1.4" height="10.0" fill="#3e9a5b"/><rect x="2082.5" y="467.7" width="4.8" height="5.0" fill="#3e9a5b"/><rect x="2088.5" y="443.3" width="1.4" height="26.1" fill="#3e9a5b"/><rect x="2086.8" y="445.5" width="4.8" height="22.2" fill="#3e9a5b"/><rect x="2092.8" y="426.5" width="1.4" height="22.0" fill="#3e9a5b"/><rect x="2091.1" y="432.7" width="4.8" height="12.8" fill="#3e9a5b"/><rect x="2097.2" y="430.4" width="1.4" height="12.6" fill="#ec8147"/><rect x="2095.5" y="432.7" width="4.8" height="5.2" fill="#ec8147"/><rect x="2101.5" y="416.9" width="1.4" height="26.0" fill="#3e9a5b"/><rect x="2099.8" y="421.1" width="4.8" height="16.7" fill="#3e9a5b"/><rect x="2105.9" y="420.7" width="1.4" height="13.8" fill="#ec8147"/><rect x="2104.2" y="421.1" width="4.8" height="4.7" fill="#ec8147"/><rect x="2110.2" y="424.4" width="1.4" height="9.5" fill="#ec8147"/><rect x="2108.5" y="425.8" width="4.8" height="5.8" fill="#ec8147"/><rect x="2114.5" y="430.5" width="1.4" height="5.9" fill="#ec8147"/><rect x="2112.8" y="431.6" width="4.8" height="4.1" fill="#ec8147"/><rect x="2118.9" y="434.6" width="1.4" height="13.3" fill="#ec8147"/><rect x="2117.2" y="435.8" width="4.8" height="10.5" fill="#ec8147"/><rect x="2123.2" y="442.0" width="1.4" height="10.1" fill="#3e9a5b"/><rect x="2121.5" y="445.6" width="4.8" height="3.0" fill="#3e9a5b"/><rect x="2127.6" y="440.8" width="1.4" height="11.6" fill="#ec8147"/><rect x="2125.9" y="445.6" width="4.8" height="3.0" fill="#ec8147"/><rect x="2131.9" y="407.1" width="1.4" height="40.7" fill="#3e9a5b"/><rect x="2130.2" y="413.6" width="4.8" height="32.7" fill="#3e9a5b"/><rect x="2136.2" y="388.6" width="1.4" height="30.1" fill="#3e9a5b"/><rect x="2134.5" y="390.3" width="4.8" height="23.3" fill="#3e9a5b"/><rect x="2140.6" y="379.5" width="1.4" height="17.6" fill="#3e9a5b"/><rect x="2138.9" y="380.6" width="4.8" height="9.7" fill="#3e9a5b"/><rect x="2144.9" y="378.0" width="1.4" height="18.4" fill="#ec8147"/><rect x="2143.2" y="380.6" width="4.8" height="14.9" fill="#ec8147"/><rect x="2149.3" y="392.7" width="1.4" height="6.1" fill="#3e9a5b"/><rect x="2147.6" y="394.6" width="4.8" height="3.0" fill="#3e9a5b"/><rect x="2153.6" y="392.7" width="1.4" height="5.3" fill="#ec8147"/><rect x="2151.9" y="394.6" width="4.8" height="3.0" fill="#ec8147"/><rect x="2157.9" y="385.0" width="1.4" height="16.7" fill="#3e9a5b"/><rect x="2156.2" y="385.2" width="4.8" height="9.7" fill="#3e9a5b"/><rect x="2162.3" y="378.5" width="1.4" height="10.0" fill="#ec8147"/><rect x="2160.6" y="385.2" width="4.8" height="3.0" fill="#ec8147"/><rect x="2166.6" y="379.1" width="1.4" height="9.8" fill="#3e9a5b"/><rect x="2164.9" y="380.0" width="4.8" height="5.5" fill="#3e9a5b"/><rect x="2171.0" y="373.8" width="1.4" height="8.8" fill="#3e9a5b"/><rect x="2169.3" y="376.3" width="4.8" height="3.6" fill="#3e9a5b"/><rect x="2175.3" y="376.0" width="1.4" height="18.7" fill="#ec8147"/><rect x="2173.6" y="376.3" width="4.8" height="15.1" fill="#ec8147"/><rect x="2179.6" y="376.1" width="1.4" height="16.3" fill="#3e9a5b"/><rect x="2177.9" y="380.8" width="4.8" height="10.7" fill="#3e9a5b"/><rect x="2184.0" y="356.7" width="1.4" height="28.9" fill="#3e9a5b"/><rect x="2182.3" y="364.1" width="4.8" height="16.7" fill="#3e9a5b"/><rect x="2188.3" y="360.1" width="1.4" height="24.2" fill="#ec8147"/><rect x="2186.6" y="364.1" width="4.8" height="19.9" fill="#ec8147"/><rect x="2192.7" y="368.5" width="1.4" height="16.4" fill="#3e9a5b"/><rect x="2191.0" y="369.1" width="4.8" height="14.9" fill="#3e9a5b"/><rect x="2197.0" y="346.4" width="1.4" height="28.6" fill="#3e9a5b"/><rect x="2195.3" y="350.1" width="4.8" height="19.0" fill="#3e9a5b"/><rect x="2201.3" y="342.2" width="1.4" height="13.8" fill="#3e9a5b"/><rect x="2199.6" y="345.1" width="4.8" height="4.9" fill="#3e9a5b"/><rect x="2205.7" y="343.0" width="1.4" height="7.5" fill="#3e9a5b"/><rect x="2204.0" y="344.0" width="4.8" height="3.0" fill="#3e9a5b"/><rect x="2210.0" y="333.2" width="1.4" height="12.1" fill="#3e9a5b"/><rect x="2208.3" y="335.3" width="4.8" height="8.6" fill="#3e9a5b"/><rect x="2214.4" y="332.7" width="1.4" height="7.8" fill="#3e9a5b"/><rect x="2212.7" y="334.4" width="4.8" height="3.0" fill="#3e9a5b"/><rect x="2218.7" y="332.3" width="1.4" height="12.6" fill="#3e9a5b"/><rect x="2217.0" y="332.4" width="4.8" height="3.0" fill="#3e9a5b"/><rect x="2223.0" y="328.9" width="1.4" height="11.6" fill="#ec8147"/><rect x="2221.3" y="332.4" width="4.8" height="3.0" fill="#ec8147"/><rect x="2227.4" y="328.3" width="1.4" height="8.3" fill="#3e9a5b"/><rect x="2225.7" y="331.0" width="4.8" height="4.2" fill="#3e9a5b"/><rect x="2231.7" y="327.0" width="1.4" height="17.5" fill="#ec8147"/><rect x="2230.0" y="331.0" width="4.8" height="8.8" fill="#ec8147"/><rect x="2236.1" y="338.4" width="1.4" height="7.7" fill="#ec8147"/><rect x="2234.4" y="339.8" width="4.8" height="3.0" fill="#ec8147"/><rect x="2240.4" y="318.9" width="1.4" height="22.9" fill="#3e9a5b"/><rect x="2238.7" y="321.7" width="4.8" height="19.2" fill="#3e9a5b"/><rect x="2244.7" y="321.6" width="1.4" height="13.0" fill="#ec8147"/><rect x="2243.0" y="321.7" width="4.8" height="8.7" fill="#ec8147"/><rect x="2249.1" y="322.9" width="1.4" height="12.6" fill="#3e9a5b"/><rect x="2247.4" y="326.3" width="4.8" height="4.1" fill="#3e9a5b"/><rect x="2253.4" y="323.7" width="1.4" height="22.8" fill="#ec8147"/><rect x="2251.7" y="326.3" width="4.8" height="16.6" fill="#ec8147"/><rect x="2257.8" y="328.9" width="1.4" height="18.4" fill="#3e9a5b"/><rect x="2256.1" y="330.4" width="4.8" height="12.4" fill="#3e9a5b"/><rect x="2262.1" y="328.3" width="1.4" height="7.1" fill="#ec8147"/><rect x="2260.4" y="330.4" width="4.8" height="3.0" fill="#ec8147"/><rect x="2266.4" y="322.2" width="1.4" height="9.9" fill="#3e9a5b"/><rect x="2264.7" y="322.3" width="4.8" height="8.2" fill="#3e9a5b"/><rect x="2270.8" y="321.4" width="1.4" height="5.4" fill="#ec8147"/><rect x="2269.1" y="322.3" width="4.8" height="3.4" fill="#ec8147"/><rect x="2275.1" y="317.4" width="1.4" height="11.1" fill="#3e9a5b"/><rect x="2273.4" y="319.2" width="4.8" height="6.4" fill="#3e9a5b"/><rect x="2279.5" y="313.7" width="1.4" height="13.8" fill="#ec8147"/><rect x="2277.8" y="319.2" width="4.8" height="5.8" fill="#ec8147"/><rect x="2283.8" y="320.4" width="1.4" height="8.1" fill="#3e9a5b"/><rect x="2282.1" y="321.6" width="4.8" height="3.4" fill="#3e9a5b"/><rect x="2288.1" y="315.0" width="1.4" height="10.0" fill="#3e9a5b"/><rect x="2286.4" y="315.5" width="4.8" height="6.1" fill="#3e9a5b"/><rect x="2292.5" y="305.5" width="1.4" height="16.3" fill="#3e9a5b"/><rect x="2290.8" y="306.0" width="4.8" height="9.5" fill="#3e9a5b"/></g><rect x="6" y="304" width="2486.6" height="2" fill="#e0653a"/><rect x="1154" y="246" width="305" height="70" rx="6" fill="rgba(62,62,62,0.68)"/></svg>
<div class="t" style="left:705.5px;width:1200px;text-align:center;top:266.0px;font-size:31px;color:#45a85c;letter-spacing:-0.1px;">+9 347.17 € (+93%)</div>
<svg width="2688" height="800">
<rect x="2492.0" y="226" width="1.3" height="488.0" fill="#a8a8a8"/>
<rect x="6" y="712.8" width="2486.6" height="1.3" fill="#a8a8a8"/>
<rect x="2492.6" y="252.2" width="6" height="1.3" fill="#a8a8a8"/><rect x="2492.6" y="356.3" width="6" height="1.3" fill="#a8a8a8"/><rect x="2492.6" y="408.3" width="6" height="1.3" fill="#a8a8a8"/><rect x="2492.6" y="460.4" width="6" height="1.3" fill="#a8a8a8"/><rect x="2492.6" y="512.4" width="6" height="1.3" fill="#a8a8a8"/><rect x="2492.6" y="564.5" width="6" height="1.3" fill="#a8a8a8"/><rect x="2492.6" y="616.5" width="6" height="1.3" fill="#a8a8a8"/><rect x="2492.6" y="668.6" width="6" height="1.3" fill="#a8a8a8"/><rect x="151.0" y="713.4" width="1.3" height="7" fill="#a8a8a8"/><rect x="346.3" y="713.4" width="1.3" height="7" fill="#a8a8a8"/><rect x="541.6" y="713.4" width="1.3" height="7" fill="#a8a8a8"/><rect x="736.9" y="713.4" width="1.3" height="7" fill="#a8a8a8"/><rect x="932.2" y="713.4" width="1.3" height="7" fill="#a8a8a8"/><rect x="1127.5" y="713.4" width="1.3" height="7" fill="#a8a8a8"/><rect x="1322.8" y="713.4" width="1.3" height="7" fill="#a8a8a8"/><rect x="1518.1" y="713.4" width="1.3" height="7" fill="#a8a8a8"/><rect x="1713.4" y="713.4" width="1.3" height="7" fill="#a8a8a8"/><rect x="1908.7" y="713.4" width="1.3" height="7" fill="#a8a8a8"/><rect x="2104.0" y="713.4" width="1.3" height="7" fill="#a8a8a8"/>
<path d="M2492.5,305.5 L2505.5,289.5 L2602,289.5 Q2606,289.5 2606,293.5 L2606,317.8 Q2606,321.8 2602,321.8 L2505.5,321.8 Z" fill="#e0653a"/>
<g stroke="#a8a8a8" stroke-width="1.4" fill="none"><polyline points="2460,244 2469,244 2469,349.5 2460,349.5"/></g>
</svg>
<div class="t" style="left:2509.0px;top:241.9px;font-size:20.3px;color:#a8a8a8;letter-spacing:0.55px;">4750.00</div>
<div class="t" style="left:2509.0px;top:346.0px;font-size:20.3px;color:#a8a8a8;letter-spacing:0.55px;">4650.00</div>
<div class="t" style="left:2509.0px;top:398.1px;font-size:20.3px;color:#a8a8a8;letter-spacing:0.55px;">4600.00</div>
<div class="t" style="left:2509.0px;top:450.1px;font-size:20.3px;color:#a8a8a8;letter-spacing:0.55px;">4550.00</div>
<div class="t" style="left:2509.0px;top:502.2px;font-size:20.3px;color:#a8a8a8;letter-spacing:0.55px;">4500.00</div>
<div class="t" style="left:2509.0px;top:554.2px;font-size:20.3px;color:#a8a8a8;letter-spacing:0.55px;">4450.00</div>
<div class="t" style="left:2509.0px;top:606.3px;font-size:20.3px;color:#a8a8a8;letter-spacing:0.55px;">4400.00</div>
<div class="t" style="left:2509.0px;top:658.3px;font-size:20.3px;color:#a8a8a8;letter-spacing:0.55px;">4350.00</div>
<div class="t" style="left:2513.0px;top:297.1px;font-size:20.5px;color:#ffffff;letter-spacing:1.0px;-webkit-text-stroke:0.2px #ffffff;">4699.42</div>
<div class="t" style="left:2456.5px;top:297.5px;font-size:22px;letter-spacing:1.2px;color:#a8a8a8;transform:translate(-50%,-50%) rotate(-90deg);">10000 pips</div>
<div class="t" style="left:151.6px;top:725.9px;font-size:20px;color:#a8a8a8;letter-spacing:0.5px;">24 Mar 14:15</div>
<div class="t" style="left:346.9px;top:725.9px;font-size:20px;color:#a8a8a8;letter-spacing:0.5px;">25 Mar 02:30</div>
<div class="t" style="left:542.2px;top:725.9px;font-size:20px;color:#a8a8a8;letter-spacing:0.5px;">25 Mar 13:45</div>
<div class="t" style="left:737.5px;top:725.9px;font-size:20px;color:#a8a8a8;letter-spacing:0.5px;">26 Mar 02:00</div>
<div class="t" style="left:932.8px;top:725.9px;font-size:20px;color:#a8a8a8;letter-spacing:0.5px;">26 Mar 13:15</div>
<div class="t" style="left:1128.1px;top:725.9px;font-size:20px;color:#a8a8a8;letter-spacing:0.5px;">27 Mar 01:30</div>
<div class="t" style="left:1323.4px;top:725.9px;font-size:20px;color:#a8a8a8;letter-spacing:0.5px;">27 Mar 12:45</div>
<div class="t" style="left:1518.7px;top:725.9px;font-size:20px;color:#a8a8a8;letter-spacing:0.5px;">30 Mar 01:00</div>
<div class="t" style="left:1714.0px;top:725.9px;font-size:20px;color:#a8a8a8;letter-spacing:0.5px;">30 Mar 12:15</div>
<div class="t" style="left:1909.3px;top:725.9px;font-size:20px;color:#a8a8a8;letter-spacing:0.5px;">31 Mar 00:30</div>
<div class="t" style="left:2104.6px;top:725.9px;font-size:20px;color:#a8a8a8;letter-spacing:0.5px;">31 Mar 11:45</div>
<div class="t" style="left:2301.0px;top:725.9px;font-size:20px;color:#a8a8a8;letter-spacing:0.5px;">1 Apr 00:00</div>
<svg width="2688" height="800">
<path d="M2244.5,702.5 L2281,702.5 Q2284,702.5 2287,699 L2291,695 Q2293,693.5 2295,695 L2299,699 Q2302,702.5 2305,702.5 L2327.5,702.5 Q2334.5,702.5 2334.5,709.5 L2334.5,726.5 Q2334.5,733.5 2327.5,733.5 L2244.5,733.5 Q2237.5,733.5 2237.5,726.5 L2237.5,709.5 Q2237.5,702.5 2244.5,702.5 Z" fill="#000" stroke="#a8a8a8" stroke-width="1.6"/>
<g fill="#e0e0e0"><rect x="2248.3" y="709" width="1.7" height="1.7"/><rect x="2248.3" y="713" width="1.7" height="1.7"/><rect x="2248.3" y="717" width="1.7" height="1.7"/><rect x="2248.3" y="721" width="1.7" height="1.7"/><rect x="2248.3" y="725" width="1.7" height="1.7"/><rect x="2252.3" y="709" width="1.7" height="1.7"/><rect x="2252.3" y="713" width="1.7" height="1.7"/><rect x="2252.3" y="717" width="1.7" height="1.7"/><rect x="2252.3" y="721" width="1.7" height="1.7"/><rect x="2252.3" y="725" width="1.7" height="1.7"/></g>
<g fill="#a8a8a8"><rect x="2270.5" y="719.5" width="6.5" height="1.8"/><rect x="2280" y="719.5" width="6.5" height="1.8"/><rect x="2296.5" y="719.5" width="6.5" height="1.8"/><rect x="2306" y="719.5" width="6.5" height="1.8"/>
<circle cx="2291.5" cy="717" r="1.3"/><circle cx="2291.5" cy="724.5" r="1.3"/></g>
</svg>
<div style="position:absolute;left:6px;top:755px;width:2600px;height:22px;background:#474747;"></div>
<div style="position:absolute;left:6px;top:755px;width:2600px;height:2px;background:#525252;"></div>
<div style="position:absolute;left:2352px;top:763px;width:248px;height:12px;background:#a5a5a5;border-radius:6px;"></div>
<svg width="2688" height="800"><g fill="#9a9a9a"><rect x="2636.90" y="20" width="2.1" height="2.1"/><rect x="2636.90" y="24" width="2.1" height="2.1"/><rect x="2640.91" y="20" width="2.1" height="2.1"/><rect x="2640.91" y="24" width="2.1" height="2.1"/><rect x="2644.92" y="20" width="2.1" height="2.1"/><rect x="2644.92" y="24" width="2.1" height="2.1"/><rect x="2648.93" y="20" width="2.1" height="2.1"/><rect x="2648.93" y="24" width="2.1" height="2.1"/><rect x="2652.94" y="20" width="2.1" height="2.1"/><rect x="2652.94" y="24" width="2.1" height="2.1"/><rect x="2656.95" y="20" width="2.1" height="2.1"/><rect x="2656.95" y="24" width="2.1" height="2.1"/><rect x="2660.96" y="20" width="2.1" height="2.1"/><rect x="2660.96" y="24" width="2.1" height="2.1"/><rect x="2664.97" y="20" width="2.1" height="2.1"/><rect x="2664.97" y="24" width="2.1" height="2.1"/><rect x="2668.98" y="20" width="2.1" height="2.1"/><rect x="2668.98" y="24" width="2.1" height="2.1"/></g><rect x="2634.3" y="37.8" width="39.4" height="40.2" rx="7" fill="#474747"/><path d="M2648,45.9 L2648,64.2 L2652.4,60.6 L2656.4,69.9 L2660,68.4 L2656,59.3 L2661.9,59.1 Z" fill="#cbcbcb" stroke="#cbcbcb" stroke-width="0.6" stroke-linejoin="round"/><g fill="none" stroke="#b8b8b8" stroke-width="2.2" stroke-linecap="round" stroke-linejoin="round"><path d="M2654,93 V102 M2654,110 V118.7 M2641,106 H2650.2 M2657.7,106 H2667"/><path d="M2651.8,143.6 V153 M2651.8,159 V168 M2639.8,155.9 H2648.6 M2654.9,155.9 H2663.7"/><path d="M2656,139.6 V148.5 M2656,158.7 V163.6 M2643.8,151.8 H2648.6 M2659.3,151.8 H2667.7"/><path d="M2654,189.4 V198.7 M2641,202 H2650.9"/><rect x="2654.4" y="202.4" width="11.6" height="11.4" rx="1"/><path d="M2654.1,249 V275.4" stroke-width="2.6"/><path d="M2658.5,297.6 A12.2,12.2 0 1,0 2657.2,321.4"/><path d="M2665.8,304.6 A8,8 0 0,1 2652,315.8"/><path d="M2650,313.5 L2663.5,300" stroke-width="3.2"/><path d="M2664.2,298.5 L2666,296.8" stroke-width="2.6"/><path d="M2641,360.2 L2656,345.2 M2649.8,368.6 L2655.4,363.2 M2661.8,355.6 L2665.4,353.6"/><path d="M2646.6,366 L2646.6,359 M2650.6,362 L2650.6,355 M2654.6,358 L2654.6,351 M2658.4,354.5 L2658.4,348" stroke-width="2"/><path d="M2665.6,358.5 H2659.3 V369 H2665.6 M2659.3,363.6 H2664.6" stroke-width="2" stroke-linecap="butt"/><path d="M2640.8,418.7 L2649.6,410 M2644.5,404.9 L2657.7,392.2 M2649.3,409.7 L2662.5,397.7 M2655,415 L2667.3,402.5 M2644.5,404.9 L2655,415" stroke-width="2.4"/></g><g fill="#b8b8b8"><rect x="2642.0" y="440.9" width="2.4" height="2.4"/><rect x="2642.0" y="446.0" width="2.4" height="2.4"/><rect x="2642.0" y="451.1" width="2.4" height="2.4"/><rect x="2642.0" y="456.2" width="2.4" height="2.4"/><rect x="2642.0" y="461.3" width="2.4" height="2.4"/><rect x="2647.2" y="440.9" width="2.4" height="2.4"/><rect x="2647.2" y="446.0" width="2.4" height="2.4"/><rect x="2647.2" y="451.1" width="2.4" height="2.4"/><rect x="2647.2" y="456.2" width="2.4" height="2.4"/><rect x="2647.2" y="461.3" width="2.4" height="2.4"/><rect x="2652.4" y="440.9" width="2.4" height="2.4"/><rect x="2652.4" y="446.0" width="2.4" height="2.4"/><rect x="2652.4" y="451.1" width="2.4" height="2.4"/><rect x="2652.4" y="456.2" width="2.4" height="2.4"/><rect x="2652.4" y="461.3" width="2.4" height="2.4"/><rect x="2657.6" y="440.9" width="2.4" height="2.4"/><rect x="2657.6" y="446.0" width="2.4" height="2.4"/><rect x="2657.6" y="451.1" width="2.4" height="2.4"/><rect x="2662.8" y="440.9" width="2.4" height="2.4"/><rect x="2662.8" y="446.0" width="2.4" height="2.4"/><rect x="2662.8" y="451.1" width="2.4" height="2.4"/></g><g fill="none" stroke="#b8b8b8" stroke-width="2.2" stroke-linejoin="round"><path d="M2665.2,457 H2658.6 V466.6 M2658.6,461.4 H2664.2" stroke-linecap="butt"/><rect x="2643.2" y="494.2" width="21.5" height="15.2"/><path d="M2653.8,537 L2664.5,547.3 Q2665.3,548.4 2664,548.4 L2659,548.4 L2659,559.6 Q2659,561.4 2657.2,561.4 L2650.4,561.4 Q2648.6,561.4 2648.6,559.6 L2648.6,548.4 L2643.6,548.4 Q2642.3,548.4 2643.1,547.3 Z"/><path d="M2640,584.8 H2668 M2640,600.4 H2658 M2640,608.6 H2658 M2663,600 V591" stroke-linecap="butt"/><path d="M2641.6,640 V638 Q2641.6,635.6 2644,635.6 H2664.4 Q2666.8,635.6 2666.8,638 V640 M2641.6,651 V653 Q2641.6,655.4 2644,655.4 H2664.4 Q2666.8,655.4 2666.8,653 V651"/><path d="M2649.6,651.2 L2654.2,641.2 L2658.8,651.2 M2651.2,647.6 H2657.2" stroke-width="1.8" stroke-linecap="butt"/></g><path d="M2658.5,593.2 L2663,586.4 L2667.5,593.2 Z" fill="#b8b8b8"/><circle cx="2643" cy="596.7" r="1.3" fill="#b8b8b8"/><circle cx="2647" cy="593" r="1.3" fill="#b8b8b8"/><circle cx="2651" cy="589.2" r="1.3" fill="#b8b8b8"/><circle cx="2641.6" cy="645.5" r="1.4" fill="#b8b8b8"/><circle cx="2666.8" cy="645.5" r="1.4" fill="#b8b8b8"/><path d="M2665.7,279.6 L2671.7,273.6 L2671.7,279.6 Z" fill="#a8a8a8" stroke="none"/><path d="M2665.7,471.7 L2671.7,465.7 L2671.7,471.7 Z" fill="#a8a8a8" stroke="none"/><path d="M2665.7,520 L2671.7,514 L2671.7,520 Z" fill="#a8a8a8" stroke="none"/><path d="M2665.7,568 L2671.7,562 L2671.7,568 Z" fill="#a8a8a8" stroke="none"/><path d="M2665.7,616 L2671.7,610 L2671.7,616 Z" fill="#a8a8a8" stroke="none"/><rect x="2634" y="230" width="40" height="2" fill="#595959"/><rect x="2634" y="674" width="40" height="2" fill="#595959"/><rect x="2634.1" y="686" width="39.9" height="40" rx="7" fill="#b69fcf"/><circle cx="2643.9" cy="753.7" r="3.2" fill="#cfcfcf"/><circle cx="2654.3" cy="753.7" r="3.2" fill="#cfcfcf"/><circle cx="2664.8" cy="753.7" r="3.2" fill="#cfcfcf"/></svg>
<div style="position:absolute;left:0px;top:787px;width:2688px;height:2px;background:#555555;"></div>
<div style="position:absolute;left:536px;top:789px;width:2px;height:1021px;background:#444;"></div>
<div class="t" style="left:19.0px;top:821.0px;font-size:26.5px;color:#ffffff;letter-spacing:0.1px;-webkit-text-stroke:0.35px #ffffff;">Parameters</div>
<div style="position:absolute;left:328px;top:813px;width:72px;height:39.8px;background:#5e5e5e;border-radius:8px;"></div>
<div style="position:absolute;left:416px;top:813px;width:72px;height:39.8px;background:#5e5e5e;border-radius:8px;"></div>
<svg width="2688" height="1824"><g fill="none" stroke="#ececec" stroke-width="1.8" stroke-linejoin="round">
<path d="M352.8,826.2 Q352.8,824 355,824 H359.2 Q360.6,824 361.6,825 L362.4,825.8 H373.6 Q375.8,825.8 375.8,828 V840.4 Q375.8,842.6 373.6,842.6 H355 Q352.8,842.6 352.8,840.4 Z M352.8,830.6 H375.8" stroke-width="2"/>
</g><rect x="441.28" y="822.28" width="21.27" height="21.36" rx="1.6" fill="none" stroke="#fff" stroke-width="2.16"/><rect x="444.12" y="823.26" width="15.78" height="5.88" fill="#fff" /><rect x="446.18" y="823.36" width="1.86" height="3.63" fill="#5e5e5e" /><rect x="444.12" y="835.02" width="15.78" height="1.86" fill="#fff" /><rect x="444.12" y="838.84" width="15.78" height="1.96" fill="#fff" />
</svg>
<div class="t" style="left:19.7px;top:886.7px;font-size:26.3px;color:#bdbdbd;letter-spacing:0.5px;-webkit-text-stroke:0.2px #bdbdbd;">Trading Session</div>
<div style="position:absolute;left:20px;top:919.5px;width:492px;height:2px;background:#3e3e3e;"></div>
<div class="t" style="left:37.0px;top:943.3px;font-size:26.6px;color:#ffffff;letter-spacing:0.25px;-webkit-text-stroke:0.4px #ffffff;">Trading Ses<span style="letter-spacing:-0.9px">...</span></div>
<div style="position:absolute;left:224px;top:936.5px;width:288px;height:39.5px;background:linear-gradient(#656565,#5a5a5a);border-radius:9px;"></div>
<div class="t" style="left:239.0px;top:943.6px;font-size:26.5px;color:#ececec;letter-spacing:0.15px;-webkit-text-stroke:0.2px #ececec;">LondonToNewYork</div>
<svg width="2688" height="1824"><polyline points="485,953.5 491.5,960.0 498,953.5" fill="none" stroke="#f0f0f0" stroke-width="2.6" stroke-linecap="round" stroke-linejoin="round"/></svg>
<div class="t" style="left:19.7px;top:999.0px;font-size:26.3px;color:#bdbdbd;letter-spacing:0.5px;-webkit-text-stroke:0.2px #bdbdbd;">Grid Setup</div>
<div style="position:absolute;left:20px;top:1031.8px;width:492px;height:2px;background:#3e3e3e;"></div>
<div class="t" style="left:37.0px;top:1055.8px;font-size:26.6px;color:#ffffff;letter-spacing:0.25px;-webkit-text-stroke:0.4px #ffffff;">Grid Spacing</div>
<div style="position:absolute;left:224px;top:1049px;width:288px;height:39.5px;background:linear-gradient(#656565,#5a5a5a);border-radius:9px;"></div>
<div class="t" style="left:239.0px;top:1056.1px;font-size:26.5px;color:#ececec;letter-spacing:0.15px;-webkit-text-stroke:0.2px #ececec;">DynamicATR</div>
<svg width="2688" height="1824"><polyline points="485,1066 491.5,1072.5 498,1066" fill="none" stroke="#f0f0f0" stroke-width="2.6" stroke-linecap="round" stroke-linejoin="round"/></svg>
<div class="t" style="left:37.0px;top:1111.8px;font-size:26.6px;color:#ffffff;letter-spacing:0.25px;-webkit-text-stroke:0.4px #ffffff;">Volatility Mul<span style="letter-spacing:-0.9px">...</span></div>
<div style="position:absolute;left:226px;top:1105px;width:284px;height:39.5px;background:#323232;border-radius:9px;box-sizing:border-box;border:1.5px solid #444;"></div>
<div class="t" style="left:247.0px;top:1112.1px;font-size:26.5px;color:#e4e4e4;letter-spacing:0.2px;-webkit-text-stroke:0.2px #e4e4e4;">4.5</div>
<svg width="2688" height="1824"><g fill="none" stroke="#707070" stroke-width="2" stroke-linecap="round" stroke-linejoin="round"><polyline points="487,1121 491.5,1116 496,1121"/><polyline points="487,1129 491.5,1134 496,1129"/></g></svg>
<div class="t" style="left:37.0px;top:1167.8px;font-size:26.6px;color:#ffffff;letter-spacing:0.25px;-webkit-text-stroke:0.4px #ffffff;">Static Step<span style="letter-spacing:-0.9px">...</span></div>
<div style="position:absolute;left:226px;top:1161px;width:284px;height:39.5px;background:#323232;border-radius:9px;box-sizing:border-box;border:1.5px solid #444;"></div>
<div class="t" style="left:247.0px;top:1168.1px;font-size:26.5px;color:#e4e4e4;letter-spacing:0.2px;-webkit-text-stroke:0.2px #e4e4e4;">120</div>
<svg width="2688" height="1824"><g fill="none" stroke="#707070" stroke-width="2" stroke-linecap="round" stroke-linejoin="round"><polyline points="487,1177 491.5,1172 496,1177"/><polyline points="487,1185 491.5,1190 496,1185"/></g></svg>
<div class="t" style="left:37.0px;top:1223.8px;font-size:26.6px;color:#ffffff;letter-spacing:0.25px;-webkit-text-stroke:0.4px #ffffff;">Orders Per S<span style="letter-spacing:-0.9px">...</span></div>
<div style="position:absolute;left:226px;top:1217px;width:284px;height:39.5px;background:#323232;border-radius:9px;box-sizing:border-box;border:1.5px solid #444;"></div>
<div class="t" style="left:247.0px;top:1224.1px;font-size:26.5px;color:#e4e4e4;letter-spacing:0.2px;-webkit-text-stroke:0.2px #e4e4e4;">3</div>
<svg width="2688" height="1824"><g fill="none" stroke="#707070" stroke-width="2" stroke-linecap="round" stroke-linejoin="round"><polyline points="487,1233 491.5,1228 496,1233"/><polyline points="487,1241 491.5,1246 496,1241"/></g></svg>
<div class="t" style="left:37.0px;top:1279.8px;font-size:26.6px;color:#ffffff;letter-spacing:0.25px;-webkit-text-stroke:0.4px #ffffff;">Trade Direct<span style="letter-spacing:-0.9px">...</span></div>
<div style="position:absolute;left:224px;top:1273px;width:288px;height:39.5px;background:linear-gradient(#656565,#5a5a5a);border-radius:9px;"></div>
<div class="t" style="left:239.0px;top:1280.1px;font-size:26.5px;color:#ececec;letter-spacing:0.15px;-webkit-text-stroke:0.2px #ececec;">BothSides</div>
<svg width="2688" height="1824"><polyline points="485,1290 491.5,1296.5 498,1290" fill="none" stroke="#f0f0f0" stroke-width="2.6" stroke-linecap="round" stroke-linejoin="round"/></svg>
<div class="t" style="left:19.7px;top:1334.5px;font-size:26.3px;color:#bdbdbd;letter-spacing:0.5px;-webkit-text-stroke:0.2px #bdbdbd;">Order Protection</div>
<div style="position:absolute;left:20px;top:1367.3px;width:492px;height:2px;background:#3e3e3e;"></div>
<div class="t" style="left:37.0px;top:1391.8px;font-size:26.6px;color:#ffffff;letter-spacing:0.25px;-webkit-text-stroke:0.4px #ffffff;">Take Profit (<span style="letter-spacing:-0.9px">...</span></div>
<div style="position:absolute;left:226px;top:1385px;width:284px;height:39.5px;background:#323232;border-radius:9px;box-sizing:border-box;border:1.5px solid #444;"></div>
<div class="t" style="left:247.0px;top:1392.1px;font-size:26.5px;color:#e4e4e4;letter-spacing:0.2px;-webkit-text-stroke:0.2px #e4e4e4;">260</div>
<svg width="2688" height="1824"><g fill="none" stroke="#707070" stroke-width="2" stroke-linecap="round" stroke-linejoin="round"><polyline points="487,1401 491.5,1396 496,1401"/><polyline points="487,1409 491.5,1414 496,1409"/></g></svg>
<div class="t" style="left:37.0px;top:1447.8px;font-size:26.6px;color:#ffffff;letter-spacing:0.25px;-webkit-text-stroke:0.4px #ffffff;">Stop Loss (p<span style="letter-spacing:-0.9px">...</span></div>
<div style="position:absolute;left:226px;top:1441px;width:284px;height:39.5px;background:#323232;border-radius:9px;box-sizing:border-box;border:1.5px solid #444;"></div>
<div class="t" style="left:247.0px;top:1448.1px;font-size:26.5px;color:#e4e4e4;letter-spacing:0.2px;-webkit-text-stroke:0.2px #e4e4e4;">2230</div>
<svg width="2688" height="1824"><g fill="none" stroke="#707070" stroke-width="2" stroke-linecap="round" stroke-linejoin="round"><polyline points="487,1457 491.5,1452 496,1457"/><polyline points="487,1465 491.5,1470 496,1465"/></g></svg>
<div class="t" style="left:19.7px;top:1503.5px;font-size:26.3px;color:#bdbdbd;letter-spacing:0.5px;-webkit-text-stroke:0.2px #bdbdbd;">Position Sizing</div>
<div style="position:absolute;left:20px;top:1536.3px;width:492px;height:2px;background:#3e3e3e;"></div>
<div class="t" style="left:37.0px;top:1559.8px;font-size:26.6px;color:#ffffff;letter-spacing:0.25px;-webkit-text-stroke:0.4px #ffffff;">Starting Lot<span style="letter-spacing:-0.9px">...</span></div>
<div style="position:absolute;left:226px;top:1553px;width:284px;height:39.5px;background:#323232;border-radius:9px;box-sizing:border-box;border:1.5px solid #444;"></div>
<div class="t" style="left:247.0px;top:1560.1px;font-size:26.5px;color:#e4e4e4;letter-spacing:0.2px;-webkit-text-stroke:0.2px #e4e4e4;">0.04</div>
<svg width="2688" height="1824"><g fill="none" stroke="#707070" stroke-width="2" stroke-linecap="round" stroke-linejoin="round"><polyline points="487,1569 491.5,1564 496,1569"/><polyline points="487,1577 491.5,1582 496,1577"/></g></svg>
<div class="t" style="left:37.0px;top:1615.8px;font-size:26.6px;color:#ffffff;letter-spacing:0.25px;-webkit-text-stroke:0.4px #ffffff;">Max Total Ex<span style="letter-spacing:-0.9px">...</span></div>
<div style="position:absolute;left:226px;top:1609px;width:284px;height:39.5px;background:#323232;border-radius:9px;box-sizing:border-box;border:1.5px solid #444;"></div>
<div class="t" style="left:247.0px;top:1616.1px;font-size:26.5px;color:#e4e4e4;letter-spacing:0.2px;-webkit-text-stroke:0.2px #e4e4e4;">1.4</div>
<svg width="2688" height="1824"><g fill="none" stroke="#707070" stroke-width="2" stroke-linecap="round" stroke-linejoin="round"><polyline points="487,1625 491.5,1620 496,1625"/><polyline points="487,1633 491.5,1638 496,1633"/></g></svg>
<div class="t" style="left:19.7px;top:1671.1px;font-size:26.3px;color:#bdbdbd;letter-spacing:0.5px;-webkit-text-stroke:0.2px #bdbdbd;">Risk &amp; Profit</div>
<div style="position:absolute;left:20px;top:1703.9px;width:492px;height:2px;background:#3e3e3e;"></div>
<div class="t" style="left:37.0px;top:1727.8px;font-size:26.6px;color:#ffffff;letter-spacing:0.25px;-webkit-text-stroke:0.4px #ffffff;">Take Profit<span style="letter-spacing:-0.9px">...</span></div>
<div style="position:absolute;left:226px;top:1721px;width:284px;height:39.5px;background:#323232;border-radius:9px;box-sizing:border-box;border:1.5px solid #444;"></div>
<div class="t" style="left:247.0px;top:1728.1px;font-size:26.5px;color:#e4e4e4;letter-spacing:0.2px;-webkit-text-stroke:0.2px #e4e4e4;">246</div>
<svg width="2688" height="1824"><g fill="none" stroke="#707070" stroke-width="2" stroke-linecap="round" stroke-linejoin="round"><polyline points="487,1737 491.5,1732 496,1737"/><polyline points="487,1745 491.5,1750 496,1745"/></g></svg>
<div style="position:absolute;left:0;top:1777px;width:536px;height:8.5px;overflow:hidden"><div style="position:absolute;left:226px;top:0;width:284px;height:39.5px;background:#323232;border-radius:9px;box-sizing:border-box;border:1.5px solid #444;"></div></div>
<div style="position:absolute;left:538px;top:789px;width:2150px;height:64px;background:#3a3a3a;"></div>
<div style="position:absolute;left:538px;top:853px;width:2150px;height:2px;background:#494949;"></div>
<div style="position:absolute;left:720px;top:789px;width:218px;height:64px;background:#555555;"></div>
<div style="position:absolute;left:1118.5px;top:789px;width:1.5px;height:64px;background:#4e4e4e;"></div>
<div style="position:absolute;left:1300.5px;top:789px;width:1.5px;height:64px;background:#4e4e4e;"></div>
<div style="position:absolute;left:1482.5px;top:789px;width:1.5px;height:64px;background:#4e4e4e;"></div>
<div style="position:absolute;left:1664.5px;top:789px;width:1.5px;height:64px;background:#4e4e4e;"></div>
<div class="t" style="left:552.7px;top:809.1px;font-size:26.5px;color:#e8e8e8;letter-spacing:0.55px;-webkit-text-stroke:0.2px #e8e8e8;">Equity</div>
<div class="t" style="left:735.0px;top:809.1px;font-size:26.5px;color:#e8e8e8;letter-spacing:0.55px;-webkit-text-stroke:0.2px #e8e8e8;">Trade statistics</div>
<div class="t" style="left:952.7px;top:809.1px;font-size:26.5px;color:#e8e8e8;letter-spacing:0.55px;-webkit-text-stroke:0.2px #e8e8e8;">Positions</div>
<div class="t" style="left:1134.7px;top:809.1px;font-size:26.5px;color:#e8e8e8;letter-spacing:0.55px;-webkit-text-stroke:0.2px #e8e8e8;">Orders</div>
<div class="t" style="left:1317.0px;top:809.1px;font-size:26.5px;color:#e8e8e8;letter-spacing:0.55px;-webkit-text-stroke:0.2px #e8e8e8;">History</div>
<div class="t" style="left:1498.6px;top:809.1px;font-size:26.5px;color:#e8e8e8;letter-spacing:0.55px;-webkit-text-stroke:0.2px #e8e8e8;">Events</div>
<div class="t" style="left:1680.8px;top:809.1px;font-size:26.5px;color:#e8e8e8;letter-spacing:0.55px;-webkit-text-stroke:0.2px #e8e8e8;">Logs</div>
<div style="position:absolute;left:554px;top:879.5px;width:2120px;height:54.5px;background:#2d2829;"></div>
<div style="position:absolute;left:554px;top:933.5px;width:2120px;height:1.6px;background:#4a4a4a;"></div>
<div style="position:absolute;left:1076.0px;top:891px;width:1.4px;height:31px;background:#4e4e4e;"></div>
<div style="position:absolute;left:1598.3px;top:891px;width:1.4px;height:31px;background:#4e4e4e;"></div>
<div style="position:absolute;left:2130.3px;top:891px;width:1.4px;height:31px;background:#4e4e4e;"></div>
<div class="t" style="left:565.5px;width:500px;text-align:center;top:895.8px;font-size:23.3px;color:#ffffff;-webkit-text-stroke:0.5px #ffffff;">Summary</div>
<div class="t" style="left:1088.0px;width:500px;text-align:center;top:895.8px;font-size:23.3px;color:#ffffff;-webkit-text-stroke:0.5px #ffffff;">All trades</div>
<div class="t" style="left:1615.0px;width:500px;text-align:center;top:895.8px;font-size:23.3px;color:#ffffff;-webkit-text-stroke:0.5px #ffffff;">Long Trades</div>
<div class="t" style="left:2152.5px;width:500px;text-align:center;top:895.8px;font-size:23.3px;color:#ffffff;-webkit-text-stroke:0.5px #ffffff;">Short Trades</div>
<div class="t" style="left:555.5px;width:520px;text-align:center;top:944.5px;font-size:27px;color:#ffffff;letter-spacing:0.3px;-webkit-text-stroke:0.45px #ffffff;">Net profit</div>
<div class="t" style="left:1078.0px;width:520px;text-align:center;top:944.5px;font-size:27px;color:#ffffff;letter-spacing:0.3px;-webkit-text-stroke:0.45px #ffffff;">9 347.18</div>
<div class="t" style="left:1605.0px;width:520px;text-align:center;top:944.5px;font-size:27px;color:#ffffff;letter-spacing:0.3px;-webkit-text-stroke:0.45px #ffffff;">7 078.69</div>
<div class="t" style="left:2142.5px;width:520px;text-align:center;top:944.5px;font-size:27px;color:#ffffff;letter-spacing:0.3px;-webkit-text-stroke:0.45px #ffffff;">2 268.49</div>
<div class="t" style="left:555.5px;width:520px;text-align:center;top:988.5px;font-size:27px;color:#ffffff;letter-spacing:0.3px;-webkit-text-stroke:0.45px #ffffff;">Profit factor</div>
<div class="t" style="left:1078.0px;width:520px;text-align:center;top:988.5px;font-size:27px;color:#ffffff;letter-spacing:0.3px;-webkit-text-stroke:0.45px #ffffff;">12.36</div>
<div class="t" style="left:1605.0px;width:520px;text-align:center;top:988.5px;font-size:27px;color:#ffffff;letter-spacing:0.3px;-webkit-text-stroke:0.45px #ffffff;">21.66</div>
<div class="t" style="left:2142.5px;width:520px;text-align:center;top:988.5px;font-size:27px;color:#ffffff;letter-spacing:0.3px;-webkit-text-stroke:0.45px #ffffff;">5.72</div>
<div class="t" style="left:555.5px;width:520px;text-align:center;top:1032.5px;font-size:27px;color:#ffffff;letter-spacing:0.3px;-webkit-text-stroke:0.45px #ffffff;">Commission</div>
<div class="t" style="left:1078.0px;width:520px;text-align:center;top:1032.5px;font-size:27px;color:#ffffff;letter-spacing:0.3px;-webkit-text-stroke:0.45px #ffffff;">-289.32</div>
<div class="t" style="left:1605.0px;width:520px;text-align:center;top:1032.5px;font-size:27px;color:#ffffff;letter-spacing:0.3px;-webkit-text-stroke:0.45px #ffffff;">-126.84</div>
<div class="t" style="left:2142.5px;width:520px;text-align:center;top:1032.5px;font-size:27px;color:#ffffff;letter-spacing:0.3px;-webkit-text-stroke:0.45px #ffffff;">-162.48</div>
<div class="t" style="left:555.5px;width:520px;text-align:center;top:1076.5px;font-size:27px;color:#ffffff;letter-spacing:0.3px;-webkit-text-stroke:0.45px #ffffff;">Swap</div>
<div class="t" style="left:1078.0px;width:520px;text-align:center;top:1076.5px;font-size:27px;color:#ffffff;letter-spacing:0.3px;-webkit-text-stroke:0.45px #ffffff;">0.00</div>
<div class="t" style="left:1605.0px;width:520px;text-align:center;top:1076.5px;font-size:27px;color:#ffffff;letter-spacing:0.3px;-webkit-text-stroke:0.45px #ffffff;">0.00</div>
<div class="t" style="left:2142.5px;width:520px;text-align:center;top:1076.5px;font-size:27px;color:#ffffff;letter-spacing:0.3px;-webkit-text-stroke:0.45px #ffffff;">0.00</div>
<div class="t" style="left:555.5px;width:520px;text-align:center;top:1120.5px;font-size:27px;color:#ffffff;letter-spacing:0.3px;-webkit-text-stroke:0.45px #ffffff;">Max balance drawdown</div>
<div class="t" style="left:1078.0px;width:520px;text-align:center;top:1120.5px;font-size:27px;color:#ffffff;letter-spacing:0.3px;-webkit-text-stroke:0.45px #ffffff;">1.73%</div>
<div class="t" style="left:1605.0px;width:520px;text-align:center;top:1120.5px;font-size:27px;color:#ffffff;letter-spacing:0.3px;-webkit-text-stroke:0.45px #ffffff;">-</div>
<div class="t" style="left:2142.5px;width:520px;text-align:center;top:1120.5px;font-size:27px;color:#ffffff;letter-spacing:0.3px;-webkit-text-stroke:0.45px #ffffff;">-</div>
<div class="t" style="left:555.5px;width:520px;text-align:center;top:1164.5px;font-size:27px;color:#ffffff;letter-spacing:0.3px;-webkit-text-stroke:0.45px #ffffff;">Max equity drawdown</div>
<div class="t" style="left:1078.0px;width:520px;text-align:center;top:1164.5px;font-size:27px;color:#ffffff;letter-spacing:0.3px;-webkit-text-stroke:0.45px #ffffff;">1.64%</div>
<div class="t" style="left:1605.0px;width:520px;text-align:center;top:1164.5px;font-size:27px;color:#ffffff;letter-spacing:0.3px;-webkit-text-stroke:0.45px #ffffff;">-</div>
<div class="t" style="left:2142.5px;width:520px;text-align:center;top:1164.5px;font-size:27px;color:#ffffff;letter-spacing:0.3px;-webkit-text-stroke:0.45px #ffffff;">-</div>
<div class="t" style="left:555.5px;width:520px;text-align:center;top:1208.5px;font-size:27px;color:#ffffff;letter-spacing:0.3px;-webkit-text-stroke:0.45px #ffffff;">Total trades</div>
<div class="t" style="left:1078.0px;width:520px;text-align:center;top:1208.5px;font-size:27px;color:#ffffff;letter-spacing:0.3px;-webkit-text-stroke:0.45px #ffffff;">285</div>
<div class="t" style="left:1605.0px;width:520px;text-align:center;top:1208.5px;font-size:27px;color:#ffffff;letter-spacing:0.3px;-webkit-text-stroke:0.45px #ffffff;">121</div>
<div class="t" style="left:2142.5px;width:520px;text-align:center;top:1208.5px;font-size:27px;color:#ffffff;letter-spacing:0.3px;-webkit-text-stroke:0.45px #ffffff;">164</div>
<div class="t" style="left:555.5px;width:520px;text-align:center;top:1252.5px;font-size:27px;color:#ffffff;letter-spacing:0.3px;-webkit-text-stroke:0.45px #ffffff;">Winning trades</div>
<div class="t" style="left:1078.0px;width:520px;text-align:center;top:1252.5px;font-size:27px;color:#ffffff;letter-spacing:0.3px;-webkit-text-stroke:0.45px #ffffff;">276</div>
<div class="t" style="left:1605.0px;width:520px;text-align:center;top:1252.5px;font-size:27px;color:#ffffff;letter-spacing:0.3px;-webkit-text-stroke:0.45px #ffffff;">118</div>
<div class="t" style="left:2142.5px;width:520px;text-align:center;top:1252.5px;font-size:27px;color:#ffffff;letter-spacing:0.3px;-webkit-text-stroke:0.45px #ffffff;">158</div>
<div class="t" style="left:555.5px;width:520px;text-align:center;top:1296.5px;font-size:27px;color:#ffffff;letter-spacing:0.3px;-webkit-text-stroke:0.45px #ffffff;">Max Consecutive Winning Trades</div>
<div class="t" style="left:1078.0px;width:520px;text-align:center;top:1296.5px;font-size:27px;color:#ffffff;letter-spacing:0.3px;-webkit-text-stroke:0.45px #ffffff;">61</div>
<div class="t" style="left:1605.0px;width:520px;text-align:center;top:1296.5px;font-size:27px;color:#ffffff;letter-spacing:0.3px;-webkit-text-stroke:0.45px #ffffff;">91</div>
<div class="t" style="left:2142.5px;width:520px;text-align:center;top:1296.5px;font-size:27px;color:#ffffff;letter-spacing:0.3px;-webkit-text-stroke:0.45px #ffffff;">74</div>
<div class="t" style="left:555.5px;width:520px;text-align:center;top:1340.5px;font-size:27px;color:#ffffff;letter-spacing:0.3px;-webkit-text-stroke:0.45px #ffffff;">Largest winning trade</div>
<div class="t" style="left:1078.0px;width:520px;text-align:center;top:1340.5px;font-size:27px;color:#ffffff;letter-spacing:0.3px;-webkit-text-stroke:0.45px #ffffff;">673.94</div>
<div class="t" style="left:1605.0px;width:520px;text-align:center;top:1340.5px;font-size:27px;color:#ffffff;letter-spacing:0.3px;-webkit-text-stroke:0.45px #ffffff;">673.94</div>
<div class="t" style="left:2142.5px;width:520px;text-align:center;top:1340.5px;font-size:27px;color:#ffffff;letter-spacing:0.3px;-webkit-text-stroke:0.45px #ffffff;">63.44</div>
<div class="t" style="left:555.5px;width:520px;text-align:center;top:1384.5px;font-size:27px;color:#ffffff;letter-spacing:0.3px;-webkit-text-stroke:0.45px #ffffff;">Losing trades</div>
<div class="t" style="left:1078.0px;width:520px;text-align:center;top:1384.5px;font-size:27px;color:#ffffff;letter-spacing:0.3px;-webkit-text-stroke:0.45px #ffffff;">9</div>
<div class="t" style="left:1605.0px;width:520px;text-align:center;top:1384.5px;font-size:27px;color:#ffffff;letter-spacing:0.3px;-webkit-text-stroke:0.45px #ffffff;">3</div>
<div class="t" style="left:2142.5px;width:520px;text-align:center;top:1384.5px;font-size:27px;color:#ffffff;letter-spacing:0.3px;-webkit-text-stroke:0.45px #ffffff;">6</div>
<div class="t" style="left:555.5px;width:520px;text-align:center;top:1428.5px;font-size:27px;color:#ffffff;letter-spacing:0.3px;-webkit-text-stroke:0.45px #ffffff;">Max Consecutive Losing Trades</div>
<div class="t" style="left:1078.0px;width:520px;text-align:center;top:1428.5px;font-size:27px;color:#ffffff;letter-spacing:0.3px;-webkit-text-stroke:0.45px #ffffff;">2</div>
<div class="t" style="left:1605.0px;width:520px;text-align:center;top:1428.5px;font-size:27px;color:#ffffff;letter-spacing:0.3px;-webkit-text-stroke:0.45px #ffffff;">2</div>
<div class="t" style="left:2142.5px;width:520px;text-align:center;top:1428.5px;font-size:27px;color:#ffffff;letter-spacing:0.3px;-webkit-text-stroke:0.45px #ffffff;">1</div>
<div class="t" style="left:555.5px;width:520px;text-align:center;top:1472.5px;font-size:27px;color:#ffffff;letter-spacing:0.3px;-webkit-text-stroke:0.45px #ffffff;">Largest losing trade</div>
<div class="t" style="left:1078.0px;width:520px;text-align:center;top:1472.5px;font-size:27px;color:#ffffff;letter-spacing:0.3px;-webkit-text-stroke:0.45px #ffffff;">-122.94</div>
<div class="t" style="left:1605.0px;width:520px;text-align:center;top:1472.5px;font-size:27px;color:#ffffff;letter-spacing:0.3px;-webkit-text-stroke:0.45px #ffffff;">-122.94</div>
<div class="t" style="left:2142.5px;width:520px;text-align:center;top:1472.5px;font-size:27px;color:#ffffff;letter-spacing:0.3px;-webkit-text-stroke:0.45px #ffffff;">-92.38</div>
<div class="t" style="left:555.5px;width:520px;text-align:center;top:1516.5px;font-size:27px;color:#ffffff;letter-spacing:0.3px;-webkit-text-stroke:0.45px #ffffff;">Average trade</div>
<div class="t" style="left:1078.0px;width:520px;text-align:center;top:1516.5px;font-size:27px;color:#ffffff;letter-spacing:0.3px;-webkit-text-stroke:0.45px #ffffff;">32.79</div>
<div class="t" style="left:1605.0px;width:520px;text-align:center;top:1516.5px;font-size:27px;color:#ffffff;letter-spacing:0.3px;-webkit-text-stroke:0.45px #ffffff;">58.50</div>
<div class="t" style="left:2142.5px;width:520px;text-align:center;top:1516.5px;font-size:27px;color:#ffffff;letter-spacing:0.3px;-webkit-text-stroke:0.45px #ffffff;">13.83</div>
<div style="position:absolute;left:554px;top:1716.2px;width:2119px;height:1.6px;background:#444;"></div>
<div style="position:absolute;left:1078.3px;top:1728px;width:1.4px;height:82px;background:#444;"></div>
<div style="position:absolute;left:1608.3px;top:1728px;width:1.4px;height:82px;background:#444;"></div>
<div style="position:absolute;left:2138.3px;top:1728px;width:1.4px;height:82px;background:#444;"></div>
<div class="t" style="left:566.5px;width:500px;text-align:center;top:1737.9px;font-size:23.3px;color:#c8c8c8;-webkit-text-stroke:0.25px #c8c8c8;">Net profit</div>
<div class="t" style="left:566.5px;width:500px;text-align:center;top:1779.9px;font-size:23.3px;color:#c8c8c8;-webkit-text-stroke:0.25px #c8c8c8;">9 347.17</div>
<div style="position:absolute;left:561px;top:1768.3px;width:510px;height:1.6px;background:#444;"></div>
<div class="t" style="left:1094.0px;width:500px;text-align:center;top:1737.9px;font-size:23.3px;color:#c8c8c8;-webkit-text-stroke:0.25px #c8c8c8;">Starting capital</div>
<div class="t" style="left:1094.0px;width:500px;text-align:center;top:1779.9px;font-size:23.3px;color:#c8c8c8;-webkit-text-stroke:0.25px #c8c8c8;">10 000.00</div>
<div style="position:absolute;left:1086px;top:1768.3px;width:515px;height:1.6px;background:#444;"></div>
<div class="t" style="left:1624.0px;width:500px;text-align:center;top:1737.9px;font-size:23.3px;color:#c8c8c8;-webkit-text-stroke:0.25px #c8c8c8;">Ending Balance</div>
<div class="t" style="left:1624.0px;width:500px;text-align:center;top:1779.9px;font-size:23.3px;color:#c8c8c8;-webkit-text-stroke:0.25px #c8c8c8;">19 347.18</div>
<div style="position:absolute;left:1616px;top:1768.3px;width:515px;height:1.6px;background:#444;"></div>
<div class="t" style="left:2156.0px;width:500px;text-align:center;top:1737.9px;font-size:23.3px;color:#c8c8c8;-webkit-text-stroke:0.25px #c8c8c8;">Ending Equity</div>
<div class="t" style="left:2156.0px;width:500px;text-align:center;top:1779.9px;font-size:23.3px;color:#c8c8c8;-webkit-text-stroke:0.25px #c8c8c8;">19 347.18</div>
<div style="position:absolute;left:2146px;top:1768.3px;width:519px;height:1.6px;background:#444;"></div>
<div style="position:absolute;left:0px;top:1810px;width:2688px;height:2px;background:#474747;"></div>
<div style="position:absolute;left:0px;top:1812px;width:2688px;height:12px;background:#2a2a2a;"></div>
</body></html>
